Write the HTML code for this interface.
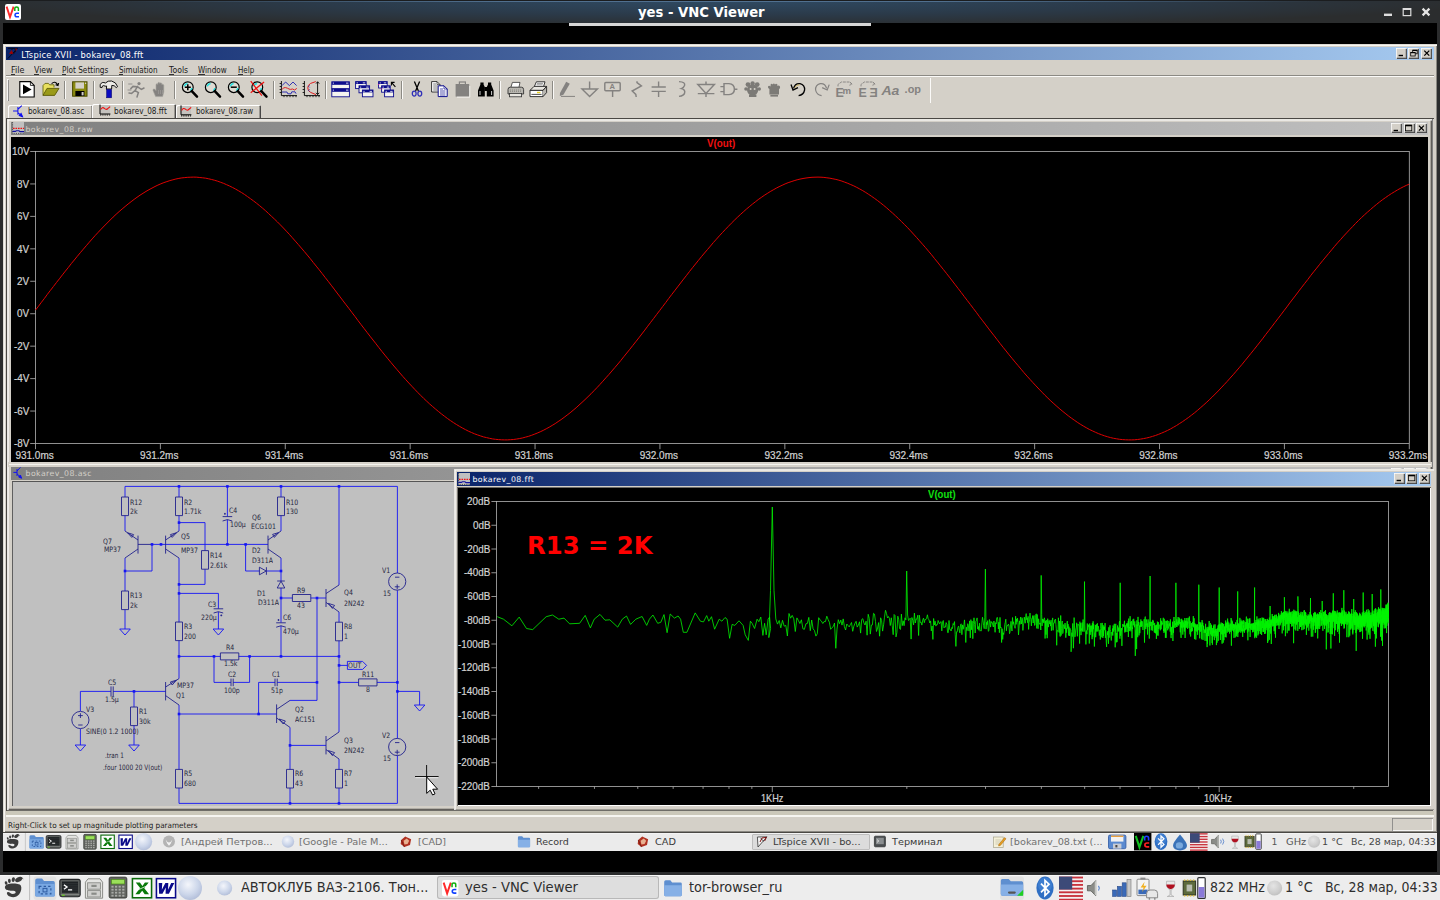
<!DOCTYPE html>
<html lang="ru"><head><meta charset="utf-8"><title>yes - VNC Viewer</title>
<style>
html,body{margin:0;padding:0;}
body{width:1440px;height:900px;overflow:hidden;background:#000;position:relative;font-family:"DejaVu Sans","Liberation Sans",sans-serif;}
.a{position:absolute;}
.t{position:absolute;white-space:nowrap;line-height:1;}
svg{position:absolute;overflow:visible;}
.ui{font-family:"DejaVu Sans","Liberation Sans",sans-serif;}
.ar{font-family:"Liberation Sans",sans-serif;}
/* classic win frame pieces */
.face{background:#d4d0c8;}
.btn{position:absolute;background:#d4d0c8;box-shadow:inset 1px 1px 0 #fff, inset -1px -1px 0 #404040, inset -2px -2px 0 #808080;}
.sep{position:absolute;width:1px;background:#808080;box-shadow:1px 0 0 #fff;}
.sunk{position:absolute;box-shadow:inset 1px 1px 0 #808080, inset -1px -1px 0 #fff;}
</style></head>
<body>
<div class="a" style="left:0;top:0;width:1440px;height:23px;background:radial-gradient(ellipse 760px 26px at 720px 0px,#2f4a63 0%,#2b3a49 55%,#2b2d2e 100%);border-top:1px solid #1b1d1f;box-sizing:border-box;"></div>
<div class="a" style="left:0;top:1px;width:1440px;height:1px;background:linear-gradient(90deg,rgba(80,110,140,0) 8%,rgba(84,116,148,0.9) 35%,rgba(84,116,148,0.9) 65%,rgba(80,110,140,0) 92%);"></div>
<div class="a" style="left:0;top:23px;width:3px;height:850px;background:#2b2c2d;"></div>
<div class="a" style="left:1437px;top:23px;width:3px;height:850px;background:#2b2c2d;"></div>
<div class="a" style="left:0;top:872.4px;width:1440px;height:3px;background:#2b2c2d;"></div>
<div class="a" style="left:5px;top:4px;width:16px;height:16px;background:#fff;border-radius:2px;"></div>
<svg style="left:5px;top:4px" width="16" height="16" viewBox="0 0 16 16"><path d="M1.6 2.6 L5 13 L8.6 2.6" fill="none" stroke="#ff2a2a" stroke-width="1.9"/><path d="M9.8 7 V4.6 Q9.8 3 11.6 3 Q13.4 3 13.4 4.6 V7" fill="none" stroke="#10b010" stroke-width="1.5"/><path d="M14 9.2 H12 Q10 9.2 10 11 Q10 12.8 12 12.8 H14" fill="none" stroke="#1040ff" stroke-width="1.5"/></svg>
<div class="t ui" style="left:638px;top:5.5px;font-size:13.2px;font-weight:bold;color:#fff;">yes - VNC Viewer</div>
<svg style="left:1380px;top:4px" width="56" height="16" viewBox="1380 4 56 16"><rect x="1384" y="13.6" width="8" height="2.4" fill="#ddd"/><rect x="1403.2" y="8.6" width="7.6" height="7" fill="none" stroke="#ddd" stroke-width="1.2"/><rect x="1403" y="8" width="8" height="2" fill="#ddd"/><path d="M1422.6 8.6 L1429.4 15.4 M1429.4 8.6 L1422.6 15.4" stroke="#e4e4e4" stroke-width="2.2"/></svg>
<div class="a" style="left:569px;top:23px;width:302px;height:3px;background:#d6d6d6;"></div>
<div class="a" style="left:3px;top:44px;width:1434px;height:788px;background:#d4d0c8;box-shadow:inset 1px 1px 0 #dedbd4, inset 2px 2px 0 #f6f5f1, inset -1px -1px 0 #8a8882;"></div>
<div class="a" style="left:6px;top:47px;width:1428px;height:13.2px;background:linear-gradient(90deg,#0a246a 0%,#a6caf0 100%);"></div>
<svg style="left:7px;top:47px" width="13" height="13" viewBox="7 47 13 13"><path d="M7.8 48.3 H17.6 L7.8 58.6" fill="none" stroke="#05081c" stroke-width="1"/><path d="M9 54 L11.6 50 L13.4 53.8 Z" fill="#a00000"/><path d="M15 48.8 H17 L15.6 52.4 Z" fill="#b00000"/><path d="M11.6 50 L12.6 48.6 M13.4 53.8 L15.4 52 L15 49" fill="none" stroke="#05081c" stroke-width="0.9"/></svg>
<span class="t" style="left:21.20px;top:51.38px;font-family:'DejaVu Sans','Liberation Sans',sans-serif;font-weight:normal;font-size:8.30px;color:#fff;letter-spacing:0.235px;">LTspice XVII - bokarev_08.fft</span>
<div class="a" style="left:1421.1px;top:48.4px;width:11.2px;height:10.5px;background:#d4d0c8;box-shadow:inset 0.7px 0.7px 0 #fff, inset -0.7px -0.7px 0 #404040, inset -1.4px -1.4px 0 #808080;"></div><div class="a" style="left:1408.1px;top:48.4px;width:11.2px;height:10.5px;background:#d4d0c8;box-shadow:inset 0.7px 0.7px 0 #fff, inset -0.7px -0.7px 0 #404040, inset -1.4px -1.4px 0 #808080;"></div><div class="a" style="left:1395.6px;top:48.4px;width:11.2px;height:10.5px;background:#d4d0c8;box-shadow:inset 0.7px 0.7px 0 #fff, inset -0.7px -0.7px 0 #404040, inset -1.4px -1.4px 0 #808080;"></div><svg style="left:1395.6px;top:48.4px" width="36.7" height="10.5" viewBox="1395.6 48.4 36.7 10.5" ><path d="M1423.9 51.0 l5 5 M1428.9 51.0 l-5 5" stroke="#000" stroke-width="1.3" fill="none"/><rect x="1412.3" y="50.6" width="4.5" height="3.6" fill="none" stroke="#000" stroke-width="0.8"/><rect x="1412.3" y="50.2" width="4.5" height="1.2" fill="#000"/><rect x="1410.3" y="52.8" width="4.5" height="3.6" fill="#d4d0c8" stroke="#000" stroke-width="0.8"/><rect x="1410.3" y="52.4" width="4.5" height="1.2" fill="#000"/><rect x="1398.2" y="55.2" width="4.4" height="1.4" fill="#000"/></svg>
<span class="t" style="left:10.50px;top:65.87px;font-family:'DejaVu Sans','Liberation Sans',sans-serif;font-weight:normal;font-size:8.90px;color:#1a1a1a;transform:scaleX(0.9065);transform-origin:0 0;">File</span>
<div class="a" style="left:10.5px;top:74px;width:4.64076px;height:0.7px;background:#333;"></div>
<span class="t" style="left:33.50px;top:65.87px;font-family:'DejaVu Sans','Liberation Sans',sans-serif;font-weight:normal;font-size:8.90px;color:#1a1a1a;transform:scaleX(0.8759);transform-origin:0 0;">View</span>
<div class="a" style="left:33.5px;top:74px;width:5.33287px;height:0.7px;background:#333;"></div>
<span class="t" style="left:61.50px;top:65.87px;font-family:'DejaVu Sans','Liberation Sans',sans-serif;font-weight:normal;font-size:8.90px;color:#1a1a1a;transform:scaleX(0.8288);transform-origin:0 0;">Plot Settings</span>
<div class="a" style="left:61.5px;top:74px;width:4.44803px;height:0.7px;background:#333;"></div>
<span class="t" style="left:118.80px;top:65.87px;font-family:'DejaVu Sans','Liberation Sans',sans-serif;font-weight:normal;font-size:8.90px;color:#1a1a1a;transform:scaleX(0.8163);transform-origin:0 0;">Simulation</span>
<div class="a" style="left:118.8px;top:74px;width:4.61174px;height:0.7px;background:#333;"></div>
<span class="t" style="left:168.80px;top:65.87px;font-family:'DejaVu Sans','Liberation Sans',sans-serif;font-weight:normal;font-size:8.90px;color:#1a1a1a;transform:scaleX(0.8758);transform-origin:0 0;">Tools</span>
<div class="a" style="left:168.8px;top:74px;width:4.76118px;height:0.7px;background:#333;"></div>
<span class="t" style="left:198.30px;top:65.87px;font-family:'DejaVu Sans','Liberation Sans',sans-serif;font-weight:normal;font-size:8.90px;color:#1a1a1a;transform:scaleX(0.8179);transform-origin:0 0;">Window</span>
<div class="a" style="left:198.3px;top:74px;width:7.19704px;height:0.7px;background:#333;"></div>
<span class="t" style="left:237.50px;top:65.87px;font-family:'DejaVu Sans','Liberation Sans',sans-serif;font-weight:normal;font-size:8.90px;color:#1a1a1a;transform:scaleX(0.8034);transform-origin:0 0;">Help</span>
<div class="a" style="left:237.5px;top:74px;width:5.37636px;height:0.7px;background:#333;"></div>
<div class="a" style="left:6px;top:75px;width:1428px;height:0.8px;background:#8c8a84;"></div>
<div class="a" style="left:6px;top:75.8px;width:1428px;height:0.8px;background:#fbfaf8;"></div>
<span class="t" style="left:8.40px;top:821.70px;font-family:'DejaVu Sans','Liberation Sans',sans-serif;font-weight:normal;font-size:7.80px;color:#1a1a1a;transform:scaleX(0.9300);transform-origin:0 0;">Right-Click to set up magnitude plotting parameters</span>
<div class="a" style="left:1392px;top:818px;width:41px;height:12.5px;box-shadow:inset 0.8px 0.8px 0 #808080, inset -0.8px -0.8px 0 #fff;"></div>
<div class="a" style="left:6px;top:811.4px;width:1428px;height:4px;background:#cbc8ba;"></div>
<div class="a" style="left:6px;top:815.4px;width:1428px;height:1.3px;background:#f6f5f1;"></div>
<div class="a" style="left:3px;top:831.7px;width:1434px;height:1.1px;background:#4a4844;"></div>
<div class="a" style="left:6px;top:118px;width:1428px;height:693.4px;background:#808080;box-shadow:inset 1.2px 1px 0 #4a4844, inset -1px 0 0 #d4d0c8, inset 0 -1.5px 0 #6e6c67;"></div>
<div class="a" style="left:7.2px;top:79px;width:2.2px;height:21.5px;background:#d4d0c8;box-shadow:inset 0.8px 0.8px 0 #fff, inset -0.8px -0.8px 0 #808080;"></div>
<div class="a" style="left:63.9px;top:80.5px;width:0.8px;height:18.5px;background:#8c8a84;"></div>
<div class="a" style="left:64.7px;top:80.5px;width:0.8px;height:18.5px;background:#fbfaf8;"></div>
<div class="a" style="left:92.9px;top:80.5px;width:0.8px;height:18.5px;background:#8c8a84;"></div>
<div class="a" style="left:93.7px;top:80.5px;width:0.8px;height:18.5px;background:#fbfaf8;"></div>
<div class="a" style="left:121.9px;top:80.5px;width:0.8px;height:18.5px;background:#8c8a84;"></div>
<div class="a" style="left:122.7px;top:80.5px;width:0.8px;height:18.5px;background:#fbfaf8;"></div>
<div class="a" style="left:173.9px;top:80.5px;width:0.8px;height:18.5px;background:#8c8a84;"></div>
<div class="a" style="left:174.7px;top:80.5px;width:0.8px;height:18.5px;background:#fbfaf8;"></div>
<div class="a" style="left:272.9px;top:80.5px;width:0.8px;height:18.5px;background:#8c8a84;"></div>
<div class="a" style="left:273.7px;top:80.5px;width:0.8px;height:18.5px;background:#fbfaf8;"></div>
<div class="a" style="left:324.9px;top:80.5px;width:0.8px;height:18.5px;background:#8c8a84;"></div>
<div class="a" style="left:325.7px;top:80.5px;width:0.8px;height:18.5px;background:#fbfaf8;"></div>
<div class="a" style="left:401.1px;top:80.5px;width:0.8px;height:18.5px;background:#8c8a84;"></div>
<div class="a" style="left:401.9px;top:80.5px;width:0.8px;height:18.5px;background:#fbfaf8;"></div>
<div class="a" style="left:498.9px;top:80.5px;width:0.8px;height:18.5px;background:#8c8a84;"></div>
<div class="a" style="left:499.7px;top:80.5px;width:0.8px;height:18.5px;background:#fbfaf8;"></div>
<div class="a" style="left:551.9px;top:80.5px;width:0.8px;height:18.5px;background:#8c8a84;"></div>
<div class="a" style="left:552.7px;top:80.5px;width:0.8px;height:18.5px;background:#fbfaf8;"></div>
<div class="a" style="left:929.6px;top:77.6px;width:0.8px;height:25px;background:#8c8a84;"></div>
<div class="a" style="left:930.4px;top:77.6px;width:0.8px;height:25px;background:#fbfaf8;"></div>
<svg style="left:0px;top:78px" width="940" height="25" viewBox="0 78 940 25" ><g transform="translate(19,81)"><path d="M0.8 0.6 H11.4 L15.2 4.4 V16 H0.8 Z" fill="#fff" stroke="#000" stroke-width="1.1"/><path d="M11.4 0.6 V4.4 H15.2" fill="none" stroke="#000" stroke-width="0.8"/><path d="M4 3.6 L12.6 8.4 L4 13.2 Z" fill="#000"/></g><g transform="translate(42,81)"><path d="M1 14.4 V4.6 L3 2.4 H6.4 L7.6 3.8 H12 V6.4" fill="#e8e060" stroke="#6a6a10" stroke-width="0.9"/><path d="M1 14.4 L5 7.4 H17 L12.6 14.4 Z" fill="#9a9a18" stroke="#5a5a08" stroke-width="0.9"/><path d="M9.6 2.6 Q13 -0.6 15.6 3.6 M13.6 3.8 L16 4.6 L16.6 2" fill="none" stroke="#000" stroke-width="1.1"/></g><g transform="translate(72,81)"><rect x="0.6" y="0.8" width="14.4" height="14.4" fill="#8a8a10" stroke="#4a4a00" stroke-width="1"/><rect x="3.4" y="1.4" width="8.6" height="6.2" fill="#d4d0c8"/><rect x="3.4" y="10" width="9" height="5" fill="#000"/><rect x="9.6" y="11" width="2" height="3.4" fill="#d4d0c8"/><rect x="13" y="1.6" width="1.2" height="1.4" fill="#d4d0c8"/></g><g transform="translate(99,80)"><path d="M1.2 7.4 Q0.2 3.6 3.2 2.6 Q5 2.2 6.4 3 Q9 0.4 12.6 1 Q17 2 18.6 6.6 L17.2 7.6 Q15.4 5 12.8 5.4 L12.6 9 H7.4 L7.6 6 Q6 6.6 4.8 5.6 Q3 5.4 3 7.6 Z" fill="#ecebe6" stroke="#111" stroke-width="1"/><rect x="7.6" y="9.4" width="5" height="8.4" fill="#0a0ac0" stroke="#000060" stroke-width="0.5"/></g><g transform="translate(128,81)" stroke="#848280" fill="none" stroke-width="1.5" stroke-linecap="round"><circle cx="11" cy="2.6" r="1.6" fill="#848280" stroke="none"/><path d="M9.6 5.4 L7 9.6 L10.4 11.6 L9 16 M7.6 9 L3.6 12.4 L1 12 M9.2 5.8 L5 5.4 L2.8 7.6 M10 6.2 L13.4 8.4 L16 7"/><path d="M0.6 3 H4 M0 9 H3" stroke-width="0.8"/></g><g transform="translate(152,81)"><path d="M3.6 15.6 L1 9.4 Q0.6 7.6 2.6 8 L4 9.6 V3.4 Q4.8 2 5.8 3.4 V2 Q6.8 0.6 7.8 2 V2.4 Q8.8 1 9.8 2.4 V3.6 Q10.8 2.6 11.8 4 V11 L10.6 15.6 Z" fill="#848280" stroke="#a4a29c" stroke-width="0.6"/><path d="M6 10 h0.8 m1.2 0 h0.8 m1.2 0 h0.8 M6 12 h0.8 m1.2 0 h0.8 m1.2 0 h0.8" stroke="#c8c6c0" stroke-width="0.7"/></g><g transform="translate(181,81)"><circle cx="6.8" cy="6.2" r="5.4" fill="#dedbd3" stroke="#000" stroke-width="1.2"/><path d="M3.2 5.4 Q4 2.8 6.6 2.4 M9.4 9.6 Q10.6 8.6 10.8 7" stroke="#20e0e0" stroke-width="1.5" fill="none"/><path d="M10.8 10.2 L16 15.6" stroke="#000" stroke-width="2.5" stroke-linecap="round"/><path d="M3.8 6.2 H9.8 M6.8 3.2 V9.2" stroke="#000" stroke-width="1.5"/></g><g transform="translate(204,81)"><circle cx="6.8" cy="6.2" r="5.4" fill="#dedbd3" stroke="#000" stroke-width="1.2"/><path d="M3.2 5.4 Q4 2.8 6.6 2.4 M9.4 9.6 Q10.6 8.6 10.8 7" stroke="#20e0e0" stroke-width="1.5" fill="none"/><path d="M10.8 10.2 L16 15.6" stroke="#000" stroke-width="2.5" stroke-linecap="round"/></g><g transform="translate(227,81)"><circle cx="6.8" cy="6.2" r="5.4" fill="#dedbd3" stroke="#000" stroke-width="1.2"/><path d="M3.2 5.4 Q4 2.8 6.6 2.4 M9.4 9.6 Q10.6 8.6 10.8 7" stroke="#20e0e0" stroke-width="1.5" fill="none"/><path d="M10.8 10.2 L16 15.6" stroke="#000" stroke-width="2.5" stroke-linecap="round"/><path d="M3.8 6.2 H9.8" stroke="#000" stroke-width="1.5"/></g><g transform="translate(250.5,81)"><circle cx="6.8" cy="6.2" r="5.4" fill="#dedbd3" stroke="#000" stroke-width="1.2"/><path d="M3.2 5.4 Q4 2.8 6.6 2.4 M9.4 9.6 Q10.6 8.6 10.8 7" stroke="#20e0e0" stroke-width="1.5" fill="none"/><path d="M10.8 10.2 L16 15.6" stroke="#000" stroke-width="2.5" stroke-linecap="round"/><path d="M0.2 0.2 L11.4 14.6 M13.6 1 L0.2 11.8" stroke="#f01010" stroke-width="1.2"/></g><g transform="translate(279,81)"><path d="M2.4 0 V14.6 H18" fill="none" stroke="#000" stroke-width="0.9"/><path d="M0.6 2.5 h1.8 M0.6 5.5 h1.8 M0.6 8.5 h1.8 M0.6 11.5 h1.8 M5 14.6 v1.6 M8 14.6 v1.6 M11 14.6 v1.6 M14 14.6 v1.6 M17 14.6 v1.6" stroke="#000" stroke-width="0.8"/><path d="M3 4.6 L6.6 1 L10.4 4.6 L14 1 L17.6 4.6" fill="none" stroke="#2020b0" stroke-width="0.9"/><path d="M3 8.6 Q4.4 6 6.6 6.6 T10 8 T13.6 8 L15.6 9 L17.8 7.4" fill="none" stroke="#e02020" stroke-width="1"/><path d="M3 11 H8 L8.8 12.8 H12 L12.8 10.8 H16 L17 12.6" fill="none" stroke="#2020b0" stroke-width="0.9"/></g><g transform="translate(302,81)"><path d="M2.4 0 V14.6 H18" fill="none" stroke="#000" stroke-width="0.9"/><path d="M0.6 2.5 h1.8 M0.6 5.5 h1.8 M0.6 8.5 h1.8 M0.6 11.5 h1.8 M5 14.6 v1.6 M8 14.6 v1.6 M11 14.6 v1.6 M14 14.6 v1.6 M17 14.6 v1.6" stroke="#000" stroke-width="0.8"/><path d="M13.8 0.6 L8.6 2.4 Q5.6 4 5.8 7 Q5.8 10 8.6 11.4 L14 13.6" fill="none" stroke="#e02020" stroke-width="1"/><path d="M7.6 4.4 l-1 1 l1 1 M7.6 8.4 l-1 1 l1 1" fill="none" stroke="#2020b0" stroke-width="0.8"/><path d="M15.6 0.8 V13.6 M14 2.6 L15.6 0.8 L17.2 2.6 M14 11.8 L15.6 13.6 L17.2 11.8" fill="none" stroke="#000" stroke-width="0.9"/></g><g transform="translate(331,81)"><rect x="0.8" y="0.8" width="17.6" height="7" fill="#f4f3ef" stroke="#0c0c8c" stroke-width="0.9"/><rect x="0.8" y="0.8" width="17.6" height="3" fill="#0c0c8c"/><rect x="1.8" y="1.7" width="1.2" height="0.8" fill="#fff"/><rect x="15" y="1.7" width="2.4" height="0.8" fill="#fff"/><rect x="0.8" y="7.8" width="17.6" height="8" fill="#f4f3ef" stroke="#0c0c8c" stroke-width="0.9"/><rect x="0.8" y="7.8" width="17.6" height="3" fill="#0c0c8c"/><rect x="1.8" y="8.7" width="1.2" height="0.8" fill="#fff"/><rect x="15" y="8.7" width="2.4" height="0.8" fill="#fff"/></g><g transform="translate(355,81)"><rect x="0.6" y="0.6" width="10.6" height="7" fill="#f4f3ef" stroke="#0c0c8c" stroke-width="0.9"/><rect x="0.6" y="0.6" width="10.6" height="2.4" fill="#0c0c8c"/><rect x="1.6" y="1.5" width="1.2" height="0.8" fill="#fff"/><rect x="7.8" y="1.5" width="2.4" height="0.8" fill="#fff"/><rect x="4" y="4.8" width="10.6" height="7" fill="#f4f3ef" stroke="#0c0c8c" stroke-width="0.9"/><rect x="4" y="4.8" width="10.6" height="2.4" fill="#0c0c8c"/><rect x="5" y="5.7" width="1.2" height="0.8" fill="#fff"/><rect x="11.2" y="5.7" width="2.4" height="0.8" fill="#fff"/><rect x="7.4" y="9" width="10.6" height="6.8" fill="#f4f3ef" stroke="#0c0c8c" stroke-width="0.9"/><rect x="7.4" y="9" width="10.6" height="2.4" fill="#0c0c8c"/><rect x="8.4" y="9.9" width="1.2" height="0.8" fill="#fff"/><rect x="14.6" y="9.9" width="2.4" height="0.8" fill="#fff"/></g><g transform="translate(378,81)"><rect x="0.6" y="0.6" width="8.6" height="6.4" fill="#f4f3ef" stroke="#0c0c8c" stroke-width="0.9"/><rect x="0.6" y="0.6" width="8.6" height="2.4" fill="#0c0c8c"/><rect x="1.6" y="1.5" width="1.2" height="0.8" fill="#fff"/><rect x="5.8" y="1.5" width="2.4" height="0.8" fill="#fff"/><rect x="3.6" y="4.8" width="8.6" height="6.4" fill="#f4f3ef" stroke="#0c0c8c" stroke-width="0.9"/><rect x="3.6" y="4.8" width="8.6" height="2.4" fill="#0c0c8c"/><rect x="4.6" y="5.7" width="1.2" height="0.8" fill="#fff"/><rect x="8.8" y="5.7" width="2.4" height="0.8" fill="#fff"/><rect x="6.6" y="9" width="9" height="6.8" fill="#f4f3ef" stroke="#0c0c8c" stroke-width="0.9"/><rect x="6.6" y="9" width="9" height="2.4" fill="#0c0c8c"/><rect x="7.6" y="9.9" width="1.2" height="0.8" fill="#fff"/><rect x="12.2" y="9.9" width="2.4" height="0.8" fill="#fff"/><path d="M17.4 5.8 L13.6 1.6 M13.4 4.6 V1.4 H16.6" fill="none" stroke="#000" stroke-width="1.1"/><rect x="0.2" y="3" width="1" height="1" fill="#d02090"/><rect x="3.2" y="7.4" width="1" height="1" fill="#d02090"/></g><g transform="translate(411,81)"><path d="M3.4 0.6 L7.4 10 M8.6 0.6 L4.6 10" stroke="#000" stroke-width="1.3" fill="none"/><ellipse cx="3.2" cy="12.6" rx="1.9" ry="2.5" fill="none" stroke="#3030b8" stroke-width="1.3"/><ellipse cx="8.8" cy="12.6" rx="1.9" ry="2.5" fill="none" stroke="#3030b8" stroke-width="1.3"/></g><g transform="translate(431,81)"><path d="M0.6 0.6 H6 L9 3.6 V11 H0.6 Z" fill="#fff" stroke="#222" stroke-width="0.9"/><path d="M6 0.6 V3.6 H9" fill="none" stroke="#222" stroke-width="0.7"/><path d="M2.2 3 H5 M2.2 5 H7 M2.2 7 H7 M2.2 9 H7" stroke="#444" stroke-width="0.7"/><path d="M7.2 4.8 H13 L16.2 8 V15.6 H7.2 Z" fill="#fff" stroke="#0c0c8c" stroke-width="1"/><path d="M13 4.8 V8 H16.2" fill="none" stroke="#0c0c8c" stroke-width="0.7"/><path d="M9 8 H12 M9 10 H14.4 M9 12 H14.4 M9 14 H14.4" stroke="#0c0c8c" stroke-width="0.7"/></g><g transform="translate(455,81)"><rect x="0.6" y="3" width="13.6" height="12.6" fill="#848280"/><rect x="4.4" y="1" width="6" height="3.4" fill="none" stroke="#848280" stroke-width="1.2"/><path d="M14.8 5 V16.2 H2" stroke="#f4f3ef" stroke-width="0.9" fill="none"/></g><g transform="translate(477,81)"><path d="M1 15.4 V9.6 L3.4 3.6 V1.6 H6.6 V3.6 L7.8 6 V15.4 Z" fill="#000"/><path d="M16.6 15.4 V9.6 L14.2 3.6 V1.6 H11 V3.6 L9.8 6 V15.4 Z" fill="#000"/><rect x="7.4" y="6" width="2.8" height="4" fill="#000"/><path d="M3 10 V14 M14.6 10 V14" stroke="#fff" stroke-width="0.8"/></g><g transform="translate(507,81)"><path d="M4 6 L5.4 1.4 H13 L12 6" fill="#fff" stroke="#333" stroke-width="0.8"/><path d="M1 8.6 Q1 6.2 3.2 6.2 H14.4 Q16.6 6.2 16.6 8.6 V13 H1 Z" fill="#b8b6b0" stroke="#333" stroke-width="0.9"/><rect x="2.6" y="12.4" width="12" height="3.4" fill="#e8e6e0" stroke="#333" stroke-width="0.8"/><path d="M3 9 h11 M3 10.4 h11" stroke="#7a7872" stroke-width="0.7" stroke-dasharray="1 1"/></g><g transform="translate(529,81)"><path d="M5.4 5.4 L7.4 0.8 H16 L14.6 5.4" fill="#fff" stroke="#222" stroke-width="0.9"/><path d="M8 2.4 h6 M7.6 3.8 h6" stroke="#555" stroke-width="0.6"/><path d="M1 9.4 L5 5.4 H17.6 L14 9.4 Z" fill="#e8e6e0" stroke="#222" stroke-width="0.9"/><path d="M1 9.4 H14 V15.6 H1 Z" fill="#fff" stroke="#222" stroke-width="0.9"/><path d="M14 9.4 L17.6 5.4 V11.6 L14 15.6" fill="#b8b6b0" stroke="#222" stroke-width="0.9"/><rect x="8" y="10.8" width="3.4" height="1.4" fill="#e8d020"/><path d="M2.4 13.4 H12.6" stroke="#222" stroke-width="0.8"/></g><g transform="translate(559,81)"><path d="M1 12 L7.2 0.8 L10.8 2.8 L4.4 13.8 L0.8 15 Z" fill="#848280"/><path d="M2 15.4 H16" stroke="#848280" stroke-width="1"/></g><g transform="translate(581,81)" stroke="#848280" fill="none" stroke-width="1.45"><path d="M8.6 0.6 V8 M1 8 H16.4 L8.6 15.6 Z"/></g><g transform="translate(604,81)" stroke="#848280" fill="none" stroke-width="1.45"><rect x="0.8" y="1.4" width="15.4" height="8.4" rx="1"/><path d="M8.6 9.8 V16"/></g><text x="609.4" y="89.4" font-family="Liberation Sans,sans-serif" font-weight="bold" font-size="7.6" fill="#848280">A</text><g transform="translate(630,81)" stroke="#848280" fill="none" stroke-width="1.45"><path d="M7 0.2 V1.6 L11.4 5 L2.2 10 L5.8 13.4 L6.2 16"/></g><g transform="translate(651,81)" stroke="#848280" fill="none" stroke-width="1.45"><path d="M7.6 0.4 V6 M7.6 10.4 V16 M0.6 6 H14.8 M0.6 10.4 H14.8" stroke-width="1.4"/></g><g transform="translate(677,81)" stroke="#848280" fill="none" stroke-width="1.45"><path d="M2 0.6 Q8.6 1 7.6 4.4 Q7 6.6 4.4 7.6 Q8.6 8.6 7.6 12 Q7 14.6 2 15.4"/></g><g transform="translate(697,81)" stroke="#848280" fill="none" stroke-width="1.45"><path d="M0.8 3.4 H17.4 L9 12.4 Z M0.8 12.6 H17.4 M9 0.6 V3.4 M9 12.6 V16"/></g><g transform="translate(720,81)" stroke="#848280" fill="none" stroke-width="1.45"><path d="M0.4 5.6 H4 M0.4 10.6 H4 M4 2.6 H9 Q14.4 3 14.4 8.2 Q14.4 13 9 13.6 H4 Z M14.4 8.2 H17.4"/></g><g transform="translate(744,81)" fill="#7c7a76"><circle cx="8.6" cy="9" r="5.6"/><circle cx="4" cy="3.6" r="2.4"/><circle cx="8.6" cy="2.4" r="2.2"/><circle cx="13.2" cy="3.6" r="2.4"/><circle cx="2" cy="8" r="1.8"/><circle cx="15.2" cy="8" r="1.8"/><rect x="5" y="13.6" width="7.4" height="2.4"/><circle cx="6.6" cy="8" r="1" fill="#d4d0c8"/><circle cx="10.6" cy="8" r="1" fill="#d4d0c8"/></g><g transform="translate(767,82)" fill="#7c7a76"><path d="M2.4 12.4 V7 Q0.6 6 1 4.4 Q2 3 3.6 4.4 V2.6 Q4.6 1 5.8 2.4 Q6.8 0.4 8 2.4 Q9.2 1 10.4 2.6 V4 Q12 3 13 4.6 Q13.6 6.4 12 7.2 V12.4 Z"/><rect x="3.4" y="12.8" width="7.6" height="1.8"/></g><g transform="translate(790,81)" fill="none"><path d="M3.6 7.4 Q5 2 10 2.6 Q15 4 14.6 9 Q13.6 14 8.6 14.6" stroke="#000" stroke-width="1.3"/><path d="M1 3.6 L3 9 L8 6.6" stroke="#000" stroke-width="1.3"/><path d="M4.6 7 Q6 3.4 9.6 3.8" stroke="#c8a020" stroke-width="0.6"/></g><g transform="translate(814,81)" fill="none" stroke="#848280" stroke-width="1.2"><path d="M12.6 7.4 Q11.2 2 6.2 2.6 Q1.2 4 1.6 9 Q2.6 14 7.6 14.6"/><path d="M15.2 3.6 L13.2 9 L8.2 6.6"/></g><g transform="translate(835,81)" fill="none" stroke="#848280" stroke-width="0.9"><path d="M3 5.4 V3.4 L6.4 1 H14.4 L17 3 M15 1.2 L17.2 3.2 L14.4 4.2" stroke-dasharray="3 0.8"/></g><g transform="translate(858,81)" fill="none" stroke="#848280" stroke-width="0.9"><path d="M3 5.4 V3.4 L6.4 1 H14.4 L17 3 M15 1.2 L17.2 3.2 L14.4 4.2" stroke-dasharray="3 0.8"/></g><text x="835.4" y="97.4" font-size="12.4" font-family="Liberation Sans,sans-serif" font-weight="bold" fill="#848280">E</text><text x="842.4" y="93.6" font-size="9.6" font-family="Liberation Sans,sans-serif" font-weight="bold" fill="#848280">m</text><text x="858.4" y="97.4" font-size="12.4" font-family="Liberation Sans,sans-serif" font-weight="bold" fill="#848280">E</text><text x="869.4" y="97.4" font-size="12.4" font-family="Liberation Sans,sans-serif" font-weight="bold" fill="#848280">Ǝ</text><text x="881.4" y="95.2" font-size="13" font-style="italic" font-family="Liberation Sans,sans-serif" font-weight="bold" fill="#848280" textLength="18" lengthAdjust="spacingAndGlyphs">Aa</text><text x="904.6" y="93.4" font-size="10.4" font-family="Liberation Sans,sans-serif" font-weight="bold" fill="#848280" textLength="16.4" lengthAdjust="spacingAndGlyphs">.op</text></svg>
<div class="a" style="left:7.6px;top:105.4px;width:85px;height:12.2px;background:#d4d0c8;border-radius:2px 2px 0 0;box-shadow:inset 0.9px 0.9px 0 #fff, inset -0.9px 0 0 #404040, inset -1.8px 0 0 #8a8882;"></div>
<div class="a" style="left:176px;top:105.4px;width:84.6px;height:12.2px;background:#d4d0c8;border-radius:2px 2px 0 0;box-shadow:inset 0.9px 0.9px 0 #fff, inset -0.9px 0 0 #404040, inset -1.8px 0 0 #8a8882;"></div>
<div class="a" style="left:92.4px;top:103.6px;width:83.6px;height:14.8px;background:#d4d0c8;border-radius:2px 2px 0 0;box-shadow:inset 0.9px 0.9px 0 #fff, inset -0.9px 0 0 #404040, inset -1.8px 0 0 #8a8882;"></div>
<span class="t" style="left:28.40px;top:107.46px;font-family:'DejaVu Sans','Liberation Sans',sans-serif;font-weight:normal;font-size:8.80px;color:#1a1a1a;transform:scaleX(0.8197);transform-origin:0 0;">bokarev_08.asc</span>
<span class="t" style="left:114.20px;top:106.96px;font-family:'DejaVu Sans','Liberation Sans',sans-serif;font-weight:normal;font-size:8.80px;color:#1a1a1a;transform:scaleX(0.8346);transform-origin:0 0;">bokarev_08.fft</span>
<span class="t" style="left:195.80px;top:107.46px;font-family:'DejaVu Sans','Liberation Sans',sans-serif;font-weight:normal;font-size:8.80px;color:#1a1a1a;transform:scaleX(0.8177);transform-origin:0 0;">bokarev_08.raw</span>
<svg style="left:0px;top:103px" width="270" height="16" viewBox="0 103 270 16" ><g transform="translate(12.6,105.2) scale(1.15)" stroke="#1010f0" fill="none" stroke-width="0.9"><path d="M0.4 5 H4.6 M4.6 1.6 V8.4 M4.6 3.6 L8 0.4 M4.6 6.4 L8.6 10"/><path d="M8.6 10 L5.8 9 L7.4 7.2 Z" fill="#1010f0"/></g><g transform="translate(98.4,104.6)"><rect x="1.6" y="0.4" width="10" height="8.6" fill="#c4c2be"/><path d="M1.6 0 V9.4 H12" stroke="#000" stroke-width="1" fill="none"/><path d="M1.6 10.4 H12" stroke="#000" stroke-width="1.2" stroke-dasharray="0.8 1"/><path d="M2.2 5 Q4 1.8 6 3.8 T9.6 3.8 L11.8 2" fill="none" stroke="#f01010" stroke-width="1.1"/></g><g transform="translate(179.4,105.4)"><rect x="1.6" y="0.4" width="10" height="8.6" fill="#c4c2be"/><path d="M1.6 0 V9.4 H12" stroke="#000" stroke-width="1" fill="none"/><path d="M1.6 10.4 H12" stroke="#000" stroke-width="1.2" stroke-dasharray="0.8 1"/><path d="M2.2 5 Q4 1.8 6 3.8 T9.6 3.8 L11.8 2" fill="none" stroke="#f01010" stroke-width="1.1"/></g></svg>
<div class="a" style="left:7px;top:119px;width:1425px;height:345.4px;background:#d4d0c8;box-shadow:inset 0.8px 0.8px 0 #e4e2dc, inset 1.6px 1.6px 0 #fff, inset -0.8px -0.8px 0 #55534f, inset -1.6px -1.6px 0 #8c8a84;"></div>
<div class="a" style="left:11px;top:122px;width:1417.4px;height:13.2px;background:linear-gradient(90deg,#808080 0%,#c0c0c0 100%);"></div>
<svg style="left:11.6px;top:122.4px" width="12" height="12" viewBox="0 0 12 12"><rect x="0.4" y="0" width="11.6" height="12" fill="#c0c0c0"/><path d="M0.6 0 V11" stroke="#222" stroke-width="0.8" stroke-dasharray="0.8 1"/><path d="M1 6.4 H12" stroke="#f01010" stroke-width="1.1" stroke-dasharray="1.6 0.9"/><path d="M0.6 9.4 H3.4 L4.4 8.8 H7 L8 9.6 H12" stroke="#1010a0" stroke-width="1.1" fill="none"/><path d="M0.6 11.4 H12" stroke="#222" stroke-width="0.9" stroke-dasharray="0.8 1"/></svg>
<span class="t" style="left:25.40px;top:125.50px;font-family:'DejaVu Sans','Liberation Sans',sans-serif;font-weight:normal;font-size:7.80px;color:#d4d0c8;letter-spacing:0.414px;">bokarev_08.raw</span>
<div class="a" style="left:1416.4px;top:123.2px;width:11.0px;height:10.3px;background:#d4d0c8;box-shadow:inset 0.7px 0.7px 0 #fff, inset -0.7px -0.7px 0 #404040, inset -1.4px -1.4px 0 #808080;"></div><div class="a" style="left:1403.6px;top:123.2px;width:11.0px;height:10.3px;background:#d4d0c8;box-shadow:inset 0.7px 0.7px 0 #fff, inset -0.7px -0.7px 0 #404040, inset -1.4px -1.4px 0 #808080;"></div><div class="a" style="left:1391.3px;top:123.2px;width:11.0px;height:10.3px;background:#d4d0c8;box-shadow:inset 0.7px 0.7px 0 #fff, inset -0.7px -0.7px 0 #404040, inset -1.4px -1.4px 0 #808080;"></div><svg style="left:1391.3px;top:123.2px" width="36.1" height="10.3" viewBox="1391.3 123.2 36.1 10.3" ><path d="M1419.2 125.8 l5 5 M1424.2 125.8 l-5 5" stroke="#000" stroke-width="1.3" fill="none"/><rect x="1405.9" y="125.4" width="6.2" height="5.6" fill="none" stroke="#000" stroke-width="0.8"/><rect x="1405.9" y="125.0" width="6.2" height="1.5" fill="#000"/><rect x="1393.9" y="130.0" width="4.4" height="1.4" fill="#000"/></svg>
<div class="a" style="left:11.4px;top:137px;width:1416.8px;height:325px;background:#000;"></div>
<svg style="left:11px;top:137px" width="1418" height="325" viewBox="11 137 1418 325" ><rect x="35.5" y="151.5" width="1373.8" height="292" fill="none" stroke="#b4b4b4" stroke-width="0.8"/><path d="M30.2 151.50 H35.5 M30.2 183.94 H35.5 M30.2 216.39 H35.5 M30.2 248.83 H35.5 M30.2 281.28 H35.5 M30.2 313.72 H35.5 M30.2 346.17 H35.5 M30.2 378.61 H35.5 M30.2 411.06 H35.5 M30.2 443.50 H35.5 M35.50 443.5 V449.2 M160.39 443.5 V449.2 M285.28 443.5 V449.2 M410.17 443.5 V449.2 M535.06 443.5 V449.2 M659.95 443.5 V449.2 M784.85 443.5 V449.2 M909.74 443.5 V449.2 M1034.63 443.5 V449.2 M1159.52 443.5 V449.2 M1284.41 443.5 V449.2 M1409.30 443.5 V449.2 " stroke="#b4b4b4" stroke-width="0.8" fill="none"/><polyline points="35.5,310.1 38.5,306.2 41.5,302.2 44.5,298.3 47.4,294.3 50.4,290.4 53.4,286.5 56.4,282.6 59.4,278.8 62.4,274.9 65.4,271.1 68.4,267.4 71.3,263.6 74.3,260.0 77.3,256.3 80.3,252.7 83.3,249.2 86.3,245.7 89.3,242.2 92.2,238.9 95.2,235.5 98.2,232.3 101.2,229.1 104.2,226.0 107.2,223.0 110.2,220.0 113.1,217.1 116.1,214.3 119.1,211.6 122.1,209.0 125.1,206.5 128.1,204.0 131.1,201.7 134.1,199.4 137.0,197.3 140.0,195.2 143.0,193.3 146.0,191.4 149.0,189.7 152.0,188.1 155.0,186.5 157.9,185.1 160.9,183.8 163.9,182.6 166.9,181.6 169.9,180.6 172.9,179.8 175.9,179.0 178.9,178.4 181.8,177.9 184.8,177.6 187.8,177.3 190.8,177.2 193.8,177.1 196.8,177.2 199.8,177.5 202.7,177.8 205.7,178.2 208.7,178.8 211.7,179.5 214.7,180.3 217.7,181.2 220.7,182.3 223.7,183.4 226.6,184.7 229.6,186.0 232.6,187.5 235.6,189.1 238.6,190.8 241.6,192.6 244.6,194.5 247.5,196.6 250.5,198.7 253.5,200.9 256.5,203.2 259.5,205.6 262.5,208.1 265.5,210.7 268.4,213.4 271.4,216.2 274.4,219.0 277.4,221.9 280.4,224.9 283.4,228.0 286.4,231.2 289.4,234.4 292.3,237.7 295.3,241.1 298.3,244.5 301.3,248.0 304.3,251.5 307.3,255.1 310.3,258.7 313.2,262.4 316.2,266.1 319.2,269.8 322.2,273.6 325.2,277.5 328.2,281.3 331.2,285.2 334.2,289.1 337.1,293.0 340.1,296.9 343.1,300.9 346.1,304.8 349.1,308.7 352.1,312.7 355.1,316.6 358.0,320.6 361.0,324.5 364.0,328.4 367.0,332.3 370.0,336.2 373.0,340.0 376.0,343.8 378.9,347.6 381.9,351.4 384.9,355.1 387.9,358.8 390.9,362.4 393.9,366.0 396.9,369.5 399.9,373.0 402.8,376.4 405.8,379.7 408.8,383.0 411.8,386.2 414.8,389.4 417.8,392.5 420.8,395.5 423.7,398.4 426.7,401.2 429.7,404.0 432.7,406.6 435.7,409.2 438.7,411.7 441.7,414.1 444.7,416.4 447.6,418.6 450.6,420.7 453.6,422.7 456.6,424.6 459.6,426.4 462.6,428.1 465.6,429.7 468.5,431.2 471.5,432.5 474.5,433.8 477.5,434.9 480.5,435.9 483.5,436.9 486.5,437.6 489.5,438.3 492.4,438.9 495.4,439.3 498.4,439.6 501.4,439.8 504.4,439.9 507.4,439.9 510.4,439.7 513.3,439.5 516.3,439.1 519.3,438.6 522.3,438.0 525.3,437.2 528.3,436.4 531.3,435.4 534.2,434.3 537.2,433.1 540.2,431.8 543.2,430.4 546.2,428.8 549.2,427.2 552.2,425.4 555.2,423.6 558.1,421.6 561.1,419.6 564.1,417.4 567.1,415.1 570.1,412.8 573.1,410.3 576.1,407.8 579.0,405.1 582.0,402.4 585.0,399.6 588.0,396.7 591.0,393.8 594.0,390.7 597.0,387.6 600.0,384.4 602.9,381.2 605.9,377.8 608.9,374.5 611.9,371.0 614.9,367.5 617.9,364.0 620.9,360.4 623.8,356.7 626.8,353.0 629.8,349.3 632.8,345.5 635.8,341.7 638.8,337.9 641.8,334.0 644.8,330.1 647.7,326.2 650.7,322.3 653.7,318.4 656.7,314.4 659.7,310.5 662.7,306.5 665.7,302.6 668.6,298.6 671.6,294.7 674.6,290.8 677.6,286.9 680.6,283.0 683.6,279.1 686.6,275.3 689.5,271.5 692.5,267.7 695.5,264.0 698.5,260.3 701.5,256.6 704.5,253.0 707.5,249.5 710.5,246.0 713.4,242.5 716.4,239.2 719.4,235.8 722.4,232.6 725.4,229.4 728.4,226.3 731.4,223.2 734.3,220.3 737.3,217.4 740.3,214.6 743.3,211.9 746.3,209.2 749.3,206.7 752.3,204.2 755.3,201.9 758.2,199.6 761.2,197.5 764.2,195.4 767.2,193.5 770.2,191.6 773.2,189.9 776.2,188.2 779.1,186.7 782.1,185.3 785.1,183.9 788.1,182.7 791.1,181.7 794.1,180.7 797.1,179.8 800.0,179.1 803.0,178.5 806.0,178.0 809.0,177.6 812.0,177.3 815.0,177.2 818.0,177.1 821.0,177.2 823.9,177.4 826.9,177.8 829.9,178.2 832.9,178.8 835.9,179.4 838.9,180.2 841.9,181.1 844.8,182.2 847.8,183.3 850.8,184.6 853.8,185.9 856.8,187.4 859.8,189.0 862.8,190.7 865.8,192.5 868.7,194.4 871.7,196.4 874.7,198.5 877.7,200.7 880.7,203.0 883.7,205.4 886.7,207.9 889.6,210.5 892.6,213.1 895.6,215.9 898.6,218.7 901.6,221.7 904.6,224.7 907.6,227.7 910.6,230.9 913.5,234.1 916.5,237.4 919.5,240.8 922.5,244.2 925.5,247.6 928.5,251.2 931.5,254.7 934.4,258.4 937.4,262.0 940.4,265.8 943.4,269.5 946.4,273.3 949.4,277.1 952.4,281.0 955.3,284.8 958.3,288.7 961.3,292.6 964.3,296.6 967.3,300.5 970.3,304.4 973.3,308.4 976.3,312.3 979.2,316.3 982.2,320.2 985.2,324.1 988.2,328.1 991.2,332.0 994.2,335.8 997.2,339.7 1000.1,343.5 1003.1,347.3 1006.1,351.0 1009.1,354.8 1012.1,358.4 1015.1,362.1 1018.1,365.6 1021.1,369.2 1024.0,372.7 1027.0,376.1 1030.0,379.4 1033.0,382.7 1036.0,385.9 1039.0,389.1 1042.0,392.2 1044.9,395.2 1047.9,398.1 1050.9,401.0 1053.9,403.7 1056.9,406.4 1059.9,409.0 1062.9,411.5 1065.9,413.9 1068.8,416.2 1071.8,418.4 1074.8,420.5 1077.8,422.6 1080.8,424.5 1083.8,426.3 1086.8,428.0 1089.7,429.6 1092.7,431.0 1095.7,432.4 1098.7,433.7 1101.7,434.8 1104.7,435.9 1107.7,436.8 1110.6,437.6 1113.6,438.3 1116.6,438.8 1119.6,439.3 1122.6,439.6 1125.6,439.8 1128.6,439.9 1131.6,439.9 1134.5,439.8 1137.5,439.5 1140.5,439.1 1143.5,438.6 1146.5,438.0 1149.5,437.3 1152.5,436.4 1155.4,435.5 1158.4,434.4 1161.4,433.2 1164.4,431.9 1167.4,430.5 1170.4,429.0 1173.4,427.3 1176.4,425.6 1179.3,423.7 1182.3,421.8 1185.3,419.7 1188.3,417.6 1191.3,415.3 1194.3,413.0 1197.3,410.5 1200.2,408.0 1203.2,405.4 1206.2,402.7 1209.2,399.9 1212.2,397.0 1215.2,394.0 1218.2,391.0 1221.1,387.9 1224.1,384.7 1227.1,381.5 1230.1,378.1 1233.1,374.8 1236.1,371.3 1239.1,367.8 1242.1,364.3 1245.0,360.7 1248.0,357.0 1251.0,353.3 1254.0,349.6 1257.0,345.8 1260.0,342.0 1263.0,338.2 1265.9,334.3 1268.9,330.5 1271.9,326.6 1274.9,322.6 1277.9,318.7 1280.9,314.8 1283.9,310.8 1286.9,306.9 1289.8,302.9 1292.8,299.0 1295.8,295.1 1298.8,291.1 1301.8,287.2 1304.8,283.3 1307.8,279.5 1310.7,275.6 1313.7,271.8 1316.7,268.1 1319.7,264.3 1322.7,260.6 1325.7,257.0 1328.7,253.4 1331.7,249.8 1334.6,246.3 1337.6,242.8 1340.6,239.5 1343.6,236.1 1346.6,232.9 1349.6,229.7 1352.6,226.6 1355.5,223.5 1358.5,220.5 1361.5,217.6 1364.5,214.8 1367.5,212.1 1370.5,209.5 1373.5,206.9 1376.4,204.5 1379.4,202.1 1382.4,199.8 1385.4,197.7 1388.4,195.6 1391.4,193.6 1394.4,191.8 1397.4,190.0 1400.3,188.4 1403.3,186.8 1406.3,185.4 1409.3,184.1" fill="none" stroke="#de0000" stroke-width="1"/></svg>
<span class="t" style="left:11.59px;top:147.17px;font-family:'Liberation Sans',sans-serif;font-weight:normal;font-size:10.20px;color:#d2d2d2;transform:scaleX(0.9700);transform-origin:0 0;-webkit-text-stroke:0.2px #d2d2d2;">10V</span>
<span class="t" style="left:17.10px;top:179.62px;font-family:'Liberation Sans',sans-serif;font-weight:normal;font-size:10.20px;color:#d2d2d2;transform:scaleX(0.9700);transform-origin:0 0;-webkit-text-stroke:0.2px #d2d2d2;">8V</span>
<span class="t" style="left:17.10px;top:212.06px;font-family:'Liberation Sans',sans-serif;font-weight:normal;font-size:10.20px;color:#d2d2d2;transform:scaleX(0.9700);transform-origin:0 0;-webkit-text-stroke:0.2px #d2d2d2;">6V</span>
<span class="t" style="left:17.10px;top:244.50px;font-family:'Liberation Sans',sans-serif;font-weight:normal;font-size:10.20px;color:#d2d2d2;transform:scaleX(0.9700);transform-origin:0 0;-webkit-text-stroke:0.2px #d2d2d2;">4V</span>
<span class="t" style="left:17.10px;top:276.95px;font-family:'Liberation Sans',sans-serif;font-weight:normal;font-size:10.20px;color:#d2d2d2;transform:scaleX(0.9700);transform-origin:0 0;-webkit-text-stroke:0.2px #d2d2d2;">2V</span>
<span class="t" style="left:17.10px;top:309.39px;font-family:'Liberation Sans',sans-serif;font-weight:normal;font-size:10.20px;color:#d2d2d2;transform:scaleX(0.9700);transform-origin:0 0;-webkit-text-stroke:0.2px #d2d2d2;">0V</span>
<span class="t" style="left:13.80px;top:341.84px;font-family:'Liberation Sans',sans-serif;font-weight:normal;font-size:10.20px;color:#d2d2d2;transform:scaleX(0.9700);transform-origin:0 0;-webkit-text-stroke:0.2px #d2d2d2;">-2V</span>
<span class="t" style="left:13.80px;top:374.28px;font-family:'Liberation Sans',sans-serif;font-weight:normal;font-size:10.20px;color:#d2d2d2;transform:scaleX(0.9700);transform-origin:0 0;-webkit-text-stroke:0.2px #d2d2d2;">-4V</span>
<span class="t" style="left:13.80px;top:406.73px;font-family:'Liberation Sans',sans-serif;font-weight:normal;font-size:10.20px;color:#d2d2d2;transform:scaleX(0.9700);transform-origin:0 0;-webkit-text-stroke:0.2px #d2d2d2;">-6V</span>
<span class="t" style="left:13.80px;top:439.17px;font-family:'Liberation Sans',sans-serif;font-weight:normal;font-size:10.20px;color:#d2d2d2;transform:scaleX(0.9700);transform-origin:0 0;-webkit-text-stroke:0.2px #d2d2d2;">-8V</span>
<span class="t" style="left:15.40px;top:451.04px;font-family:'Liberation Sans',sans-serif;font-weight:normal;font-size:10.00px;color:#d2d2d2;-webkit-text-stroke:0.2px #d2d2d2;">931.0ms</span>
<span class="t" style="left:140.09px;top:451.04px;font-family:'Liberation Sans',sans-serif;font-weight:normal;font-size:10.00px;color:#d2d2d2;-webkit-text-stroke:0.2px #d2d2d2;">931.2ms</span>
<span class="t" style="left:264.98px;top:451.04px;font-family:'Liberation Sans',sans-serif;font-weight:normal;font-size:10.00px;color:#d2d2d2;-webkit-text-stroke:0.2px #d2d2d2;">931.4ms</span>
<span class="t" style="left:389.87px;top:451.04px;font-family:'Liberation Sans',sans-serif;font-weight:normal;font-size:10.00px;color:#d2d2d2;-webkit-text-stroke:0.2px #d2d2d2;">931.6ms</span>
<span class="t" style="left:514.76px;top:451.04px;font-family:'Liberation Sans',sans-serif;font-weight:normal;font-size:10.00px;color:#d2d2d2;-webkit-text-stroke:0.2px #d2d2d2;">931.8ms</span>
<span class="t" style="left:639.65px;top:451.04px;font-family:'Liberation Sans',sans-serif;font-weight:normal;font-size:10.00px;color:#d2d2d2;-webkit-text-stroke:0.2px #d2d2d2;">932.0ms</span>
<span class="t" style="left:764.55px;top:451.04px;font-family:'Liberation Sans',sans-serif;font-weight:normal;font-size:10.00px;color:#d2d2d2;-webkit-text-stroke:0.2px #d2d2d2;">932.2ms</span>
<span class="t" style="left:889.44px;top:451.04px;font-family:'Liberation Sans',sans-serif;font-weight:normal;font-size:10.00px;color:#d2d2d2;-webkit-text-stroke:0.2px #d2d2d2;">932.4ms</span>
<span class="t" style="left:1014.33px;top:451.04px;font-family:'Liberation Sans',sans-serif;font-weight:normal;font-size:10.00px;color:#d2d2d2;-webkit-text-stroke:0.2px #d2d2d2;">932.6ms</span>
<span class="t" style="left:1139.22px;top:451.04px;font-family:'Liberation Sans',sans-serif;font-weight:normal;font-size:10.00px;color:#d2d2d2;-webkit-text-stroke:0.2px #d2d2d2;">932.8ms</span>
<span class="t" style="left:1264.11px;top:451.04px;font-family:'Liberation Sans',sans-serif;font-weight:normal;font-size:10.00px;color:#d2d2d2;-webkit-text-stroke:0.2px #d2d2d2;">933.0ms</span>
<span class="t" style="left:1388.80px;top:451.04px;font-family:'Liberation Sans',sans-serif;font-weight:normal;font-size:10.00px;color:#d2d2d2;-webkit-text-stroke:0.2px #d2d2d2;">933.2ms</span>
<span class="t" style="left:707.10px;top:139.47px;font-family:'Liberation Sans',sans-serif;font-weight:bold;font-size:10.20px;color:#f01010;transform:scaleX(0.9573);transform-origin:0 0;">V(out)</span>
<div class="a" style="left:7px;top:464.2px;width:1425px;height:345.7px;background:#d4d0c8;box-shadow:inset 0.8px 0.8px 0 #e4e2dc, inset 1.6px 1.6px 0 #fff, inset -0.8px -0.8px 0 #55534f, inset -1.6px -1.6px 0 #8c8a84;"></div>
<div class="a" style="left:11px;top:466.5px;width:1417.4px;height:13.7px;background:linear-gradient(90deg,#808080 0%,#c0c0c0 100%);"></div>
<div class="a" style="left:1416.4px;top:467.7px;width:11.0px;height:10.3px;background:#d4d0c8;box-shadow:inset 0.7px 0.7px 0 #fff, inset -0.7px -0.7px 0 #404040, inset -1.4px -1.4px 0 #808080;"></div><div class="a" style="left:1403.6px;top:467.7px;width:11.0px;height:10.3px;background:#d4d0c8;box-shadow:inset 0.7px 0.7px 0 #fff, inset -0.7px -0.7px 0 #404040, inset -1.4px -1.4px 0 #808080;"></div><div class="a" style="left:1391.3px;top:467.7px;width:11.0px;height:10.3px;background:#d4d0c8;box-shadow:inset 0.7px 0.7px 0 #fff, inset -0.7px -0.7px 0 #404040, inset -1.4px -1.4px 0 #808080;"></div><svg style="left:1391.3px;top:467.7px" width="36.1" height="10.3" viewBox="1391.3 467.7 36.1 10.3" ><path d="M1419.2 470.3 l5 5 M1424.2 470.3 l-5 5" stroke="#000" stroke-width="1.3" fill="none"/><rect x="1405.9" y="469.9" width="6.2" height="5.6" fill="none" stroke="#000" stroke-width="0.8"/><rect x="1405.9" y="469.5" width="6.2" height="1.5" fill="#000"/><rect x="1393.9" y="474.5" width="4.4" height="1.4" fill="#000"/></svg>
<div class="a" style="left:11.6px;top:481px;width:1416.4px;height:325.4px;background:#c0c0c0;box-shadow:inset 0.9px 0.9px 0 #555;"></div>
<span class="t" style="left:25.60px;top:470.30px;font-family:'DejaVu Sans','Liberation Sans',sans-serif;font-weight:normal;font-size:7.80px;color:#d4d0c8;letter-spacing:0.402px;">bokarev_08.asc</span>
<svg style="left:11px;top:466px" width="445" height="341" viewBox="11 466 445 341" ><g transform="translate(13.4,467.4)" stroke="#1010f0" fill="none" stroke-width="1"><path d="M0 5 H3.6 M3.6 1.6 V8.6 M3.6 3.6 L7 0 M3.6 6.4 L8 10.6"/><path d="M8.2 10.8 L5.2 9.6 L7 7.6 Z" fill="#1010f0"/></g><path d="M125 497 L125 486.4 L397.4 486.4 L397.4 573 M397.4 590.4 L397.4 738.2 M397.4 755.8 L397.4 803.4 L179 803.4 L179 788 M125 515.6 L125 531 M125 558 L125 591 M125 609.6 L125 629 M119.7 629 H130.3 L125 635 Z M152 544.4 L152 571 L125 571 M152 544.4 L268 544.4 M179 486.4 L179 497 M179 515.6 L179 531 M179 522.6 L205 522.6 L205 550.6 M205 569.2 L205 584.4 L179 584.4 M179 558 L179 622.4 M179 640.6 L179 678.6 M179 593.4 L218.4 593.4 L218.4 608.6 M218.4 611.8 L218.4 629 M213.1 629 H223.7 L218.4 635 Z M227.4 486.4 L227.4 516.4 M227.4 519.6 L227.4 544.4 M245.6 544.4 L245.6 571 L259.4 571 M266.4 571 L281 571 M281 486.4 L281 497 M281 515.6 L281 531 M281 558 L281 581 M281 588 L281 622.6 M281 625.8 L281 656.4 M281 598 L292.4 598 M310.8 598 L326 598 M339 585 L339 486.4 M339 612 L339 622.4 M339 640.8 L339 732 M317 598 L317 700.4 L290 700.4 M179 656.4 L220.4 656.4 M238.8 656.4 L339 656.4 M214 656.4 L214 682.4 L231 682.4 M233.2 682.4 L249.6 682.4 L249.6 656.4 M339 665.4 L347.4 665.4 M347.4 661.4 H362.6 L366.6 665.4 L362.6 669.4 H347.4 Z M339 682.4 L358.6 682.4 M377 682.4 L397.4 682.4 M397.4 691.4 L419.6 691.4 L419.6 705 M414.3 705 H424.9 L419.6 711 Z M134 691.4 L165.6 691.4 M179 705 L179 769.4 M179 714 L276.6 714 M80.4 711 L80.4 691.4 L111 691.4 M113.2 691.4 L134 691.4 M80.4 728.8 L80.4 745 M75.1 745 H85.7 L80.4 751 Z M134 691.4 L134 707 M134 725.6 L134 745 M128.7 745 H139.3 L134 751 Z M258.6 714 L258.6 682.4 L275 682.4 M277.2 682.4 L317 682.4 M290 727.4 L290 769.4 M290 788 L290 803.4 M290 745.4 L326 745.4 M339 759 L339 769.4 M339 788 L339 803.4" fill="none" stroke="#1414f4" stroke-width="0.9"/><path d="M121.5 497 h7 v18.6 h-7 Z M138 535.6 V553.6 M125 531 L138 540 M138 549 L125 558 M138 544.4 H152 M127.6 532.8 L133.6 534.6 L131.8 537.4 Z M121.5 591 h7 v18.6 h-7 Z M175.5 497 h7 v18.6 h-7 Z M165.6 535.6 V553.6 M165.6 540 L179 531 M165.6 549 L179 558 M176.4 532.8 L170.4 534.6 L172.2 537.4 Z M201.5 550.6 h7 v18.6 h-7 Z M175.5 622 h7 v18.6 h-7 Z M213.6 608.8 H223.2 M213.6 613 Q218.4 610.4 223.2 613 M220.4 615.4 h1.8 m-0.9 -0.9 v1.8 M222.6 516.6 H232.2 M222.6 521 Q227.4 518.2 232.2 521 M224 513.8 h1.8 m-0.9 -0.9 v1.8 M259.4 567.2 V574.8 L266.2 571 Z M266.4 567.2 V574.8 M277.5 497 h7 v18.6 h-7 Z M268 535.6 V553.6 M268 540 L281 531 M268 549 L281 558 M278.6 532.6 L272.6 534.4 L274.4 537.4 Z M277.2 588 H284.8 L281 581.2 Z M277.2 581 H284.8 M276.2 622.8 H285.8 M276.2 627.2 Q281 624.4 285.8 627.2 M277.6 620 h1.8 m-0.9 -0.9 v1.8 M292.4 594.5 h18.4 v7 h-18.4 Z M326 589 V607 M326 593.6 L339 585 M326 602.4 L339 612 M328.4 603.4 L334.6 605.4 L332.4 608.4 Z M335.5 622.2 h7 v18.6 h-7 Z M220.4 652.9 h18.4 v7 h-18.4 Z M231 678.6 V686.2 M233.2 678.6 V686.2 M358.6 678.9 h18.4 v7 h-18.4 Z M405.8 581.6 A8.6 8.6 0 1 1 388.6 581.6 A8.6 8.6 0 1 1 405.8 581.6 M395 577.2 h4.4 M394.8 586.8 h4.8 m-2.4 -2.4 v4.8 M405.8 747 A8.6 8.6 0 1 1 388.6 747 A8.6 8.6 0 1 1 405.8 747 M395 742.6 h4.4 M394.8 752.2 h4.8 m-2.4 -2.4 v4.8 M165.6 682 V700.4 M165.6 687 L179 678.6 M165.6 695.6 L179 705 M176.4 680.2 L170.4 682 L172.2 685 Z M175.5 769.4 h7 v18.6 h-7 Z M111 686.4 V696.6 M113.2 686.4 V696.6 M89 720 A8.6 8.6 0 1 1 71.8 720 A8.6 8.6 0 1 1 89 720 M78 715.6 h4.8 m-2.4 -2.4 v4.8 M78.2 725 h4.4 M130.5 707 h7 v18.6 h-7 Z M275 678.6 V686.2 M277.2 678.6 V686.2 M276.6 704.4 V723 M276.6 709.4 L290 700.4 M276.6 718 L290 727.4 M279.2 719 L285.4 721 L283.2 724 Z M286.5 769.4 h7 v18.6 h-7 Z M326 736 V754.4 M326 741 L339 732 M326 749.6 L339 759 M328.4 750.6 L334.6 752.6 L332.4 755.6 Z M335.5 769.4 h7 v18.6 h-7 Z" fill="none" stroke="#20208c" stroke-width="0.9"/><rect x="123.7" y="569.7" width="2.6" height="2.6" fill="#1414f4"/><rect x="150.7" y="543.1" width="2.6" height="2.6" fill="#1414f4"/><rect x="159.7" y="543.1" width="2.6" height="2.6" fill="#1414f4"/><rect x="226.1" y="543.1" width="2.6" height="2.6" fill="#1414f4"/><rect x="244.3" y="543.1" width="2.6" height="2.6" fill="#1414f4"/><rect x="177.7" y="485.1" width="2.6" height="2.6" fill="#1414f4"/><rect x="177.7" y="521.3" width="2.6" height="2.6" fill="#1414f4"/><rect x="177.7" y="583.1" width="2.6" height="2.6" fill="#1414f4"/><rect x="177.7" y="592.1" width="2.6" height="2.6" fill="#1414f4"/><rect x="226.1" y="485.1" width="2.6" height="2.6" fill="#1414f4"/><rect x="279.7" y="569.7" width="2.6" height="2.6" fill="#1414f4"/><rect x="279.7" y="485.1" width="2.6" height="2.6" fill="#1414f4"/><rect x="279.7" y="596.7" width="2.6" height="2.6" fill="#1414f4"/><rect x="315.7" y="596.7" width="2.6" height="2.6" fill="#1414f4"/><rect x="337.7" y="485.1" width="2.6" height="2.6" fill="#1414f4"/><rect x="315.7" y="681.1" width="2.6" height="2.6" fill="#1414f4"/><rect x="177.7" y="655.1" width="2.6" height="2.6" fill="#1414f4"/><rect x="212.7" y="655.1" width="2.6" height="2.6" fill="#1414f4"/><rect x="248.3" y="655.1" width="2.6" height="2.6" fill="#1414f4"/><rect x="279.7" y="655.1" width="2.6" height="2.6" fill="#1414f4"/><rect x="337.7" y="655.1" width="2.6" height="2.6" fill="#1414f4"/><rect x="337.7" y="664.1" width="2.6" height="2.6" fill="#1414f4"/><rect x="337.7" y="681.1" width="2.6" height="2.6" fill="#1414f4"/><rect x="396.1" y="681.1" width="2.6" height="2.6" fill="#1414f4"/><rect x="396.1" y="690.1" width="2.6" height="2.6" fill="#1414f4"/><rect x="132.7" y="690.1" width="2.6" height="2.6" fill="#1414f4"/><rect x="177.7" y="712.7" width="2.6" height="2.6" fill="#1414f4"/><rect x="257.3" y="712.7" width="2.6" height="2.6" fill="#1414f4"/><rect x="288.7" y="744.1" width="2.6" height="2.6" fill="#1414f4"/><rect x="288.7" y="802.1" width="2.6" height="2.6" fill="#1414f4"/><rect x="337.7" y="802.1" width="2.6" height="2.6" fill="#1414f4"/><path d="M415.6 777.7 H438.2" stroke="#f4f4f4" stroke-width="0.8"/><path d="M426.6 765 V777 M415 776.5 H438.6" stroke="#000" stroke-width="0.9"/><path d="M426.7 777 V793.4 L430.2 790.2 L432.6 795 L435 793.8 L432.8 789.2 H437.6 Z" fill="#fff" stroke="#000" stroke-width="1"/></svg>
<span class="t" style="left:130.00px;top:498.54px;font-family:'DejaVu Sans','Liberation Sans',sans-serif;font-weight:normal;font-size:7.40px;color:#26263e;transform:scaleX(0.8400);transform-origin:0 0;">R12</span>
<span class="t" style="left:130.00px;top:508.14px;font-family:'DejaVu Sans','Liberation Sans',sans-serif;font-weight:normal;font-size:7.40px;color:#26263e;transform:scaleX(0.8400);transform-origin:0 0;">2k</span>
<span class="t" style="left:183.60px;top:498.54px;font-family:'DejaVu Sans','Liberation Sans',sans-serif;font-weight:normal;font-size:7.40px;color:#26263e;transform:scaleX(0.8400);transform-origin:0 0;">R2</span>
<span class="t" style="left:183.60px;top:508.14px;font-family:'DejaVu Sans','Liberation Sans',sans-serif;font-weight:normal;font-size:7.40px;color:#26263e;transform:scaleX(0.8400);transform-origin:0 0;">1.71k</span>
<span class="t" style="left:229.40px;top:507.14px;font-family:'DejaVu Sans','Liberation Sans',sans-serif;font-weight:normal;font-size:7.40px;color:#26263e;transform:scaleX(0.8400);transform-origin:0 0;">C4</span>
<span class="t" style="left:229.60px;top:521.14px;font-family:'DejaVu Sans','Liberation Sans',sans-serif;font-weight:normal;font-size:7.40px;color:#26263e;transform:scaleX(0.8400);transform-origin:0 0;">100µ</span>
<span class="t" style="left:103.00px;top:537.74px;font-family:'DejaVu Sans','Liberation Sans',sans-serif;font-weight:normal;font-size:7.40px;color:#26263e;transform:scaleX(0.8400);transform-origin:0 0;">Q7</span>
<span class="t" style="left:104.40px;top:546.14px;font-family:'DejaVu Sans','Liberation Sans',sans-serif;font-weight:normal;font-size:7.40px;color:#26263e;transform:scaleX(0.8400);transform-origin:0 0;">MP37</span>
<span class="t" style="left:181.00px;top:532.54px;font-family:'DejaVu Sans','Liberation Sans',sans-serif;font-weight:normal;font-size:7.40px;color:#26263e;transform:scaleX(0.8400);transform-origin:0 0;">Q5</span>
<span class="t" style="left:180.60px;top:546.74px;font-family:'DejaVu Sans','Liberation Sans',sans-serif;font-weight:normal;font-size:7.40px;color:#26263e;transform:scaleX(0.8400);transform-origin:0 0;">MP37</span>
<span class="t" style="left:210.40px;top:551.54px;font-family:'DejaVu Sans','Liberation Sans',sans-serif;font-weight:normal;font-size:7.40px;color:#26263e;transform:scaleX(0.8400);transform-origin:0 0;">R14</span>
<span class="t" style="left:210.40px;top:561.74px;font-family:'DejaVu Sans','Liberation Sans',sans-serif;font-weight:normal;font-size:7.40px;color:#26263e;transform:scaleX(0.8400);transform-origin:0 0;">2.61k</span>
<span class="t" style="left:130.00px;top:592.14px;font-family:'DejaVu Sans','Liberation Sans',sans-serif;font-weight:normal;font-size:7.40px;color:#26263e;transform:scaleX(0.8400);transform-origin:0 0;">R13</span>
<span class="t" style="left:130.00px;top:602.14px;font-family:'DejaVu Sans','Liberation Sans',sans-serif;font-weight:normal;font-size:7.40px;color:#26263e;transform:scaleX(0.8400);transform-origin:0 0;">2k</span>
<span class="t" style="left:208.00px;top:600.54px;font-family:'DejaVu Sans','Liberation Sans',sans-serif;font-weight:normal;font-size:7.40px;color:#26263e;transform:scaleX(0.8400);transform-origin:0 0;">C3</span>
<span class="t" style="left:201.00px;top:614.14px;font-family:'DejaVu Sans','Liberation Sans',sans-serif;font-weight:normal;font-size:7.40px;color:#26263e;transform:scaleX(0.8400);transform-origin:0 0;">220µ</span>
<span class="t" style="left:183.60px;top:623.14px;font-family:'DejaVu Sans','Liberation Sans',sans-serif;font-weight:normal;font-size:7.40px;color:#26263e;transform:scaleX(0.8400);transform-origin:0 0;">R3</span>
<span class="t" style="left:183.60px;top:632.74px;font-family:'DejaVu Sans','Liberation Sans',sans-serif;font-weight:normal;font-size:7.40px;color:#26263e;transform:scaleX(0.8400);transform-origin:0 0;">200</span>
<span class="t" style="left:286.00px;top:498.54px;font-family:'DejaVu Sans','Liberation Sans',sans-serif;font-weight:normal;font-size:7.40px;color:#26263e;transform:scaleX(0.8400);transform-origin:0 0;">R10</span>
<span class="t" style="left:286.00px;top:508.14px;font-family:'DejaVu Sans','Liberation Sans',sans-serif;font-weight:normal;font-size:7.40px;color:#26263e;transform:scaleX(0.8400);transform-origin:0 0;">130</span>
<span class="t" style="left:252.40px;top:514.14px;font-family:'DejaVu Sans','Liberation Sans',sans-serif;font-weight:normal;font-size:7.40px;color:#26263e;transform:scaleX(0.8400);transform-origin:0 0;">Q6</span>
<span class="t" style="left:251.00px;top:522.54px;font-family:'DejaVu Sans','Liberation Sans',sans-serif;font-weight:normal;font-size:7.40px;color:#26263e;transform:scaleX(0.8400);transform-origin:0 0;">ECG101</span>
<span class="t" style="left:251.60px;top:547.14px;font-family:'DejaVu Sans','Liberation Sans',sans-serif;font-weight:normal;font-size:7.40px;color:#26263e;transform:scaleX(0.8400);transform-origin:0 0;">D2</span>
<span class="t" style="left:251.60px;top:557.14px;font-family:'DejaVu Sans','Liberation Sans',sans-serif;font-weight:normal;font-size:7.40px;color:#26263e;transform:scaleX(0.8400);transform-origin:0 0;">D311A</span>
<span class="t" style="left:257.00px;top:590.14px;font-family:'DejaVu Sans','Liberation Sans',sans-serif;font-weight:normal;font-size:7.40px;color:#26263e;transform:scaleX(0.8400);transform-origin:0 0;">D1</span>
<span class="t" style="left:257.60px;top:598.74px;font-family:'DejaVu Sans','Liberation Sans',sans-serif;font-weight:normal;font-size:7.40px;color:#26263e;transform:scaleX(0.8400);transform-origin:0 0;">D311A</span>
<span class="t" style="left:297.40px;top:586.74px;font-family:'DejaVu Sans','Liberation Sans',sans-serif;font-weight:normal;font-size:7.40px;color:#26263e;transform:scaleX(0.8400);transform-origin:0 0;">R9</span>
<span class="t" style="left:297.40px;top:601.74px;font-family:'DejaVu Sans','Liberation Sans',sans-serif;font-weight:normal;font-size:7.40px;color:#26263e;transform:scaleX(0.8400);transform-origin:0 0;">43</span>
<span class="t" style="left:344.00px;top:589.14px;font-family:'DejaVu Sans','Liberation Sans',sans-serif;font-weight:normal;font-size:7.40px;color:#26263e;transform:scaleX(0.8400);transform-origin:0 0;">Q4</span>
<span class="t" style="left:344.00px;top:599.54px;font-family:'DejaVu Sans','Liberation Sans',sans-serif;font-weight:normal;font-size:7.40px;color:#26263e;transform:scaleX(0.8400);transform-origin:0 0;">2N242</span>
<span class="t" style="left:382.40px;top:567.14px;font-family:'DejaVu Sans','Liberation Sans',sans-serif;font-weight:normal;font-size:7.40px;color:#26263e;transform:scaleX(0.8400);transform-origin:0 0;">V1</span>
<span class="t" style="left:383.00px;top:589.74px;font-family:'DejaVu Sans','Liberation Sans',sans-serif;font-weight:normal;font-size:7.40px;color:#26263e;transform:scaleX(0.8400);transform-origin:0 0;">15</span>
<span class="t" style="left:283.00px;top:614.14px;font-family:'DejaVu Sans','Liberation Sans',sans-serif;font-weight:normal;font-size:7.40px;color:#26263e;transform:scaleX(0.8400);transform-origin:0 0;">C6</span>
<span class="t" style="left:283.00px;top:627.74px;font-family:'DejaVu Sans','Liberation Sans',sans-serif;font-weight:normal;font-size:7.40px;color:#26263e;transform:scaleX(0.8400);transform-origin:0 0;">470µ</span>
<span class="t" style="left:344.00px;top:623.14px;font-family:'DejaVu Sans','Liberation Sans',sans-serif;font-weight:normal;font-size:7.40px;color:#26263e;transform:scaleX(0.8400);transform-origin:0 0;">R8</span>
<span class="t" style="left:344.00px;top:632.74px;font-family:'DejaVu Sans','Liberation Sans',sans-serif;font-weight:normal;font-size:7.40px;color:#26263e;transform:scaleX(0.8400);transform-origin:0 0;">1</span>
<span class="t" style="left:225.60px;top:644.14px;font-family:'DejaVu Sans','Liberation Sans',sans-serif;font-weight:normal;font-size:7.40px;color:#26263e;transform:scaleX(0.8400);transform-origin:0 0;">R4</span>
<span class="t" style="left:223.60px;top:659.74px;font-family:'DejaVu Sans','Liberation Sans',sans-serif;font-weight:normal;font-size:7.40px;color:#26263e;transform:scaleX(0.8400);transform-origin:0 0;">1.5k</span>
<span class="t" style="left:227.60px;top:671.14px;font-family:'DejaVu Sans','Liberation Sans',sans-serif;font-weight:normal;font-size:7.40px;color:#26263e;transform:scaleX(0.8400);transform-origin:0 0;">C2</span>
<span class="t" style="left:224.40px;top:686.74px;font-family:'DejaVu Sans','Liberation Sans',sans-serif;font-weight:normal;font-size:7.40px;color:#26263e;transform:scaleX(0.8400);transform-origin:0 0;">100p</span>
<span class="t" style="left:107.60px;top:679.14px;font-family:'DejaVu Sans','Liberation Sans',sans-serif;font-weight:normal;font-size:7.40px;color:#26263e;transform:scaleX(0.8400);transform-origin:0 0;">C5</span>
<span class="t" style="left:104.60px;top:695.74px;font-family:'DejaVu Sans','Liberation Sans',sans-serif;font-weight:normal;font-size:7.40px;color:#26263e;transform:scaleX(0.8400);transform-origin:0 0;">1.5µ</span>
<span class="t" style="left:176.60px;top:682.14px;font-family:'DejaVu Sans','Liberation Sans',sans-serif;font-weight:normal;font-size:7.40px;color:#26263e;transform:scaleX(0.8400);transform-origin:0 0;">MP37</span>
<span class="t" style="left:176.20px;top:692.14px;font-family:'DejaVu Sans','Liberation Sans',sans-serif;font-weight:normal;font-size:7.40px;color:#26263e;transform:scaleX(0.8400);transform-origin:0 0;">Q1</span>
<span class="t" style="left:86.40px;top:705.54px;font-family:'DejaVu Sans','Liberation Sans',sans-serif;font-weight:normal;font-size:7.40px;color:#26263e;transform:scaleX(0.8400);transform-origin:0 0;">V3</span>
<span class="t" style="left:86.40px;top:728.14px;font-family:'DejaVu Sans','Liberation Sans',sans-serif;font-weight:normal;font-size:7.40px;color:#26263e;transform:scaleX(0.8400);transform-origin:0 0;">SINE(0 1.2 1000)</span>
<span class="t" style="left:138.60px;top:707.74px;font-family:'DejaVu Sans','Liberation Sans',sans-serif;font-weight:normal;font-size:7.40px;color:#26263e;transform:scaleX(0.8400);transform-origin:0 0;">R1</span>
<span class="t" style="left:138.60px;top:718.14px;font-family:'DejaVu Sans','Liberation Sans',sans-serif;font-weight:normal;font-size:7.40px;color:#26263e;transform:scaleX(0.8400);transform-origin:0 0;">30k</span>
<span class="t" style="left:104.60px;top:752.14px;font-family:'DejaVu Sans','Liberation Sans',sans-serif;font-weight:normal;font-size:7.40px;color:#26263e;transform:scaleX(0.7648);transform-origin:0 0;">.tran 1</span>
<span class="t" style="left:102.60px;top:763.54px;font-family:'DejaVu Sans','Liberation Sans',sans-serif;font-weight:normal;font-size:7.40px;color:#26263e;transform:scaleX(0.7870);transform-origin:0 0;">.four 1000 20 V(out)</span>
<span class="t" style="left:183.60px;top:770.14px;font-family:'DejaVu Sans','Liberation Sans',sans-serif;font-weight:normal;font-size:7.40px;color:#26263e;transform:scaleX(0.8400);transform-origin:0 0;">R5</span>
<span class="t" style="left:183.60px;top:780.14px;font-family:'DejaVu Sans','Liberation Sans',sans-serif;font-weight:normal;font-size:7.40px;color:#26263e;transform:scaleX(0.8400);transform-origin:0 0;">680</span>
<span class="t" style="left:272.00px;top:671.14px;font-family:'DejaVu Sans','Liberation Sans',sans-serif;font-weight:normal;font-size:7.40px;color:#26263e;transform:scaleX(0.8400);transform-origin:0 0;">C1</span>
<span class="t" style="left:271.00px;top:686.74px;font-family:'DejaVu Sans','Liberation Sans',sans-serif;font-weight:normal;font-size:7.40px;color:#26263e;transform:scaleX(0.8400);transform-origin:0 0;">51p</span>
<span class="t" style="left:348.00px;top:661.94px;font-family:'DejaVu Sans','Liberation Sans',sans-serif;font-weight:normal;font-size:7.40px;color:#26263e;transform:scaleX(0.8400);transform-origin:0 0;">OUT</span>
<span class="t" style="left:362.40px;top:671.14px;font-family:'DejaVu Sans','Liberation Sans',sans-serif;font-weight:normal;font-size:7.40px;color:#26263e;transform:scaleX(0.8400);transform-origin:0 0;">R11</span>
<span class="t" style="left:366.00px;top:685.74px;font-family:'DejaVu Sans','Liberation Sans',sans-serif;font-weight:normal;font-size:7.40px;color:#26263e;transform:scaleX(0.8400);transform-origin:0 0;">8</span>
<span class="t" style="left:295.00px;top:705.54px;font-family:'DejaVu Sans','Liberation Sans',sans-serif;font-weight:normal;font-size:7.40px;color:#26263e;transform:scaleX(0.8400);transform-origin:0 0;">Q2</span>
<span class="t" style="left:295.00px;top:715.74px;font-family:'DejaVu Sans','Liberation Sans',sans-serif;font-weight:normal;font-size:7.40px;color:#26263e;transform:scaleX(0.8400);transform-origin:0 0;">AC151</span>
<span class="t" style="left:344.00px;top:736.74px;font-family:'DejaVu Sans','Liberation Sans',sans-serif;font-weight:normal;font-size:7.40px;color:#26263e;transform:scaleX(0.8400);transform-origin:0 0;">Q3</span>
<span class="t" style="left:344.00px;top:746.54px;font-family:'DejaVu Sans','Liberation Sans',sans-serif;font-weight:normal;font-size:7.40px;color:#26263e;transform:scaleX(0.8400);transform-origin:0 0;">2N242</span>
<span class="t" style="left:382.40px;top:732.14px;font-family:'DejaVu Sans','Liberation Sans',sans-serif;font-weight:normal;font-size:7.40px;color:#26263e;transform:scaleX(0.8400);transform-origin:0 0;">V2</span>
<span class="t" style="left:383.00px;top:754.54px;font-family:'DejaVu Sans','Liberation Sans',sans-serif;font-weight:normal;font-size:7.40px;color:#26263e;transform:scaleX(0.8400);transform-origin:0 0;">15</span>
<span class="t" style="left:295.00px;top:770.14px;font-family:'DejaVu Sans','Liberation Sans',sans-serif;font-weight:normal;font-size:7.40px;color:#26263e;transform:scaleX(0.8400);transform-origin:0 0;">R6</span>
<span class="t" style="left:295.00px;top:780.14px;font-family:'DejaVu Sans','Liberation Sans',sans-serif;font-weight:normal;font-size:7.40px;color:#26263e;transform:scaleX(0.8400);transform-origin:0 0;">43</span>
<span class="t" style="left:344.00px;top:770.14px;font-family:'DejaVu Sans','Liberation Sans',sans-serif;font-weight:normal;font-size:7.40px;color:#26263e;transform:scaleX(0.8400);transform-origin:0 0;">R7</span>
<span class="t" style="left:344.00px;top:780.14px;font-family:'DejaVu Sans','Liberation Sans',sans-serif;font-weight:normal;font-size:7.40px;color:#26263e;transform:scaleX(0.8400);transform-origin:0 0;">1</span>
<div class="a" style="left:7.8px;top:462px;width:1423.8px;height:4.5px;background:#d6d2ca;"></div>
<div class="a" style="left:8.6px;top:463.5px;width:1422.2px;height:1.7px;background:#f4f3ee;"></div>
<div class="a" style="left:454px;top:469.2px;width:980px;height:340.4px;background:#d4d0c8;box-shadow:inset 0.8px 0.8px 0 #e4e2dc, inset 1.6px 1.6px 0 #fff, inset 0 -0.8px 0 #8c8a84;"></div>
<div class="a" style="left:457px;top:472px;width:974px;height:14.2px;background:linear-gradient(90deg,#0a246a 0%,#a6caf0 100%);"></div>
<svg style="left:458.4px;top:472.8px" width="12" height="12" viewBox="0 0 12 12"><rect x="0.4" y="0" width="11.6" height="12" fill="#c0c0c0"/><path d="M0.6 0 V11" stroke="#222" stroke-width="0.8" stroke-dasharray="0.8 1"/><path d="M1 6.4 H12" stroke="#f01010" stroke-width="1.1" stroke-dasharray="1.6 0.9"/><path d="M0.6 9.4 H3.4 L4.4 8.8 H7 L8 9.6 H12" stroke="#1010a0" stroke-width="1.1" fill="none"/><path d="M0.6 11.4 H12" stroke="#222" stroke-width="0.9" stroke-dasharray="0.8 1"/></svg>
<span class="t" style="left:472.40px;top:476.30px;font-family:'DejaVu Sans','Liberation Sans',sans-serif;font-weight:normal;font-size:7.80px;color:#fff;letter-spacing:0.409px;">bokarev_08.fft</span>
<div class="a" style="left:1418.6px;top:473.4px;width:11.0px;height:10.3px;background:#d4d0c8;box-shadow:inset 0.7px 0.7px 0 #fff, inset -0.7px -0.7px 0 #404040, inset -1.4px -1.4px 0 #808080;"></div><div class="a" style="left:1405.8px;top:473.4px;width:11.0px;height:10.3px;background:#d4d0c8;box-shadow:inset 0.7px 0.7px 0 #fff, inset -0.7px -0.7px 0 #404040, inset -1.4px -1.4px 0 #808080;"></div><div class="a" style="left:1393.5px;top:473.4px;width:11.0px;height:10.3px;background:#d4d0c8;box-shadow:inset 0.7px 0.7px 0 #fff, inset -0.7px -0.7px 0 #404040, inset -1.4px -1.4px 0 #808080;"></div><svg style="left:1393.5px;top:473.4px" width="36.1" height="10.3" viewBox="1393.5 473.4 36.1 10.3" ><path d="M1421.4 476.0 l5 5 M1426.4 476.0 l-5 5" stroke="#000" stroke-width="1.3" fill="none"/><rect x="1408.1" y="475.6" width="6.2" height="5.6" fill="none" stroke="#000" stroke-width="0.8"/><rect x="1408.1" y="475.2" width="6.2" height="1.5" fill="#000"/><rect x="1396.1" y="480.2" width="4.4" height="1.4" fill="#000"/></svg>
<div class="a" style="left:457px;top:487.2px;width:974px;height:319.2px;background:#d4d0c8;box-shadow:inset 0.9px 0.9px 0 #6a6864, inset -0.9px -0.9px 0 #fff;"></div>
<div class="a" style="left:458px;top:488px;width:971.6px;height:317.2px;background:#000;"></div>
<svg style="left:458px;top:488px" width="972" height="317" viewBox="458 488 972 317" ><rect x="496.5" y="501.5" width="892" height="285" fill="none" stroke="#b4b4b4" stroke-width="0.8"/><path d="M491.4 501.50 H496.5 M491.4 525.25 H496.5 M491.4 549.00 H496.5 M491.4 572.75 H496.5 M491.4 596.50 H496.5 M491.4 620.25 H496.5 M491.4 644.00 H496.5 M491.4 667.75 H496.5 M491.4 691.50 H496.5 M491.4 715.25 H496.5 M491.4 739.00 H496.5 M491.4 762.75 H496.5 M491.4 786.50 H496.5 M538.63 786.5 v2.4 M594.46 786.5 v2.4 M637.77 786.5 v2.4 M673.16 786.5 v2.4 M703.07 786.5 v2.4 M728.99 786.5 v2.4 M751.85 786.5 v2.4 M906.83 786.5 v2.4 M985.53 786.5 v2.4 M1041.36 786.5 v2.4 M1084.67 786.5 v2.4 M1120.06 786.5 v2.4 M1149.97 786.5 v2.4 M1175.89 786.5 v2.4 M1198.75 786.5 v2.4 M1353.73 786.5 v2.4 M772.30 786.5 v5.6 M1219.20 786.5 v5.6 " stroke="#b4b4b4" stroke-width="0.8" fill="none"/><polyline points="497.3,616.7 503.5,619.2 511.9,625.8 519.2,617.1 526.5,628.5 532.7,629.6 546.2,616.7 552.5,615.0 558.8,619.2 564.0,618.1 569.6,623.8 579.6,623.3 585.2,615.4 590.4,627.9 594.2,619.2 600.0,614.4 605.0,620.2 609.8,619.8 617.7,627.1 622.3,619.2 626.5,616.0 630.6,624.4 635.8,619.2 642.1,616.5 646.7,625.4 649.4,619.2 652.9,615.0 657.7,623.3 660.8,622.3 664.0,614.6 667.1,632.7 670.2,614.0 674.4,618.1 678.1,616.0 680.6,619.2 683.3,632.3 686.9,632.3 695.2,612.9 700.4,621.2 703.5,621.9 706.7,615.6 708.8,621.2 711.5,616.7 714.6,629.2 719.2,619.2 721.9,621.2 725.0,617.5 727.1,619.2 729.6,638.3 732.1,624.4 734.8,625.4 739.0,620.8 743.1,625.4 745.2,634.8 748.3,640.4 750.4,621.2 752.1,623.3 754.6,628.5 757.1,619.2 758.8,621.7 760.8,617.1 762.9,635.4 764.6,623.3 766.2,634.8 768.1,619.2 769.6,617.1 770.6,628.5 768.8,637.6 770.5,590.6 772.3,507.0 774.0,590.6 775.8,618.9 777.5,624.1 779.2,620.5 780.8,627.9 782.5,620.3 784.2,626.2 785.8,625.4 787.4,636.0 789.0,613.5 790.6,618.2 792.2,615.4 793.8,618.8 795.3,631.5 796.9,617.9 798.4,620.5 799.9,623.5 801.4,619.8 802.9,628.8 804.4,629.3 805.9,623.8 807.4,623.4 808.8,617.4 810.3,630.7 811.7,620.0 813.1,628.8 814.5,630.6 815.9,636.1 817.3,633.7 818.7,617.7 820.1,620.0 821.4,621.1 822.8,623.5 824.1,621.5 825.4,621.7 826.8,616.2 828.1,619.5 829.4,622.3 830.7,629.3 832.0,627.6 833.3,626.5 834.5,623.0 835.8,648.3 837.0,629.1 838.3,619.7 839.5,623.6 840.8,620.1 842.0,625.1 843.2,618.9 844.4,626.7 845.6,630.0 846.8,624.0 848.0,625.5 849.2,626.9 850.3,624.7 851.5,622.5 852.7,631.3 853.8,626.4 855.0,623.2 856.1,621.3 857.2,627.1 858.4,625.0 859.5,621.8 860.6,633.1 861.7,619.5 862.8,618.7 863.9,622.9 865.0,625.0 866.1,621.2 867.1,635.2 868.2,614.3 869.3,618.4 870.3,634.1 871.4,625.0 872.4,624.9 873.5,613.3 874.5,614.1 875.5,621.6 876.5,631.5 877.6,628.0 878.6,622.6 879.6,636.2 880.6,617.8 881.6,620.4 882.6,631.1 883.6,624.8 884.5,617.2 885.5,610.3 886.5,613.5 887.5,618.0 888.4,616.5 889.4,618.3 890.3,625.5 891.3,617.8 892.2,625.4 893.2,634.7 894.1,614.5 895.0,615.5 896.0,636.9 896.9,632.5 897.8,616.2 898.7,619.4 899.6,628.7 900.5,629.4 901.4,614.1 902.3,625.6 903.2,620.8 904.1,625.7 905.0,617.8 905.9,619.9 906.7,571.0 907.6,615.0 908.5,620.5 909.3,619.4 910.2,618.2 911.1,639.1 911.9,617.5 912.8,620.4 913.6,624.9 914.4,613.1 915.3,623.0 916.1,619.0 916.9,619.1 917.8,615.2 918.6,635.5 919.4,615.2 920.2,622.4 921.0,622.1 921.9,625.1 922.7,620.1 923.5,618.1 924.3,622.7 925.1,619.3 925.9,619.5 926.6,618.4 927.4,614.8 928.2,618.9 929.0,619.8 929.8,623.0 930.6,620.9 931.3,630.9 932.1,626.0 932.9,639.4 933.6,618.5 934.4,625.0 935.1,621.2 935.9,626.1 936.6,624.5 937.4,624.6 938.1,620.5 938.9,622.7 939.6,623.8 940.3,622.0 941.1,621.7 941.8,630.9 942.5,622.1 943.3,620.5 944.0,627.9 944.7,626.8 945.4,627.1 946.1,622.6 946.9,624.3 947.6,632.6 948.3,632.6 949.0,620.5 949.7,629.4 950.4,629.4 951.1,631.0 951.8,627.5 952.5,628.5 953.1,623.6 953.8,624.7 954.5,621.6 955.2,634.6 955.9,646.4 956.6,631.8 957.2,631.9 957.9,627.4 958.6,626.1 959.2,630.0 959.9,632.9 960.6,624.5 961.2,623.8 961.9,634.7 962.5,624.9 963.2,629.3 963.9,624.8 964.5,619.9 965.1,629.4 965.8,642.5 966.4,627.2 967.1,630.6 967.7,623.7 968.4,625.9 969.0,631.1 969.6,620.9 970.3,637.9 970.9,619.6 971.5,629.7 972.1,621.1 972.8,638.7 973.4,623.8 974.0,617.8 974.6,624.4 975.2,633.0 975.8,621.3 976.5,620.3 977.1,617.9 977.7,629.1 978.3,626.5 978.9,630.3 979.5,623.2 980.1,631.2 980.7,630.6 981.3,630.9 981.9,622.9 982.5,617.2 983.1,620.9 983.6,625.4 984.2,628.7 984.8,617.4 985.4,569.0 986.0,629.1 986.6,622.3 987.1,624.7 987.7,620.6 988.3,631.3 988.9,630.8 989.4,619.5 990.0,621.8 990.6,627.1 991.1,621.4 991.7,622.9 992.3,622.5 992.8,625.5 993.4,627.0 993.9,621.0 994.5,624.5 995.1,632.3 995.6,622.7 996.2,623.8 996.7,618.1 997.3,617.3 997.8,619.9 998.4,629.0 998.9,622.2 999.4,632.7 1000.0,617.4 1000.5,627.9 1001.1,627.2 1001.6,642.5 1002.1,628.7 1002.7,639.4 1003.2,632.8 1003.7,634.5 1004.3,630.6 1004.8,624.4 1005.3,622.3 1005.8,619.2 1006.4,630.8 1006.9,626.0 1007.4,625.4 1007.9,626.1 1008.4,624.0 1009.0,625.6 1009.5,633.7 1010.0,632.1 1010.5,626.1 1011.0,621.4 1011.5,627.0 1012.0,631.0 1012.5,617.5 1013.0,624.3 1013.5,621.8 1014.1,625.4 1014.6,626.3 1015.1,628.3 1015.6,616.2 1016.1,624.4 1016.5,618.9 1017.0,621.6 1017.5,618.1 1018.0,622.9 1018.5,634.9 1019.0,628.4 1019.5,620.9 1020.0,624.4 1020.5,617.1 1021.0,620.8 1021.4,624.0 1021.9,617.6 1022.4,618.2 1022.9,630.4 1023.4,623.8 1023.9,623.3 1024.3,617.1 1024.8,620.4 1025.3,623.2 1025.8,615.9 1026.2,613.6 1026.7,619.7 1027.2,618.2 1027.6,622.7 1028.1,616.4 1028.6,629.4 1029.0,622.7 1029.5,621.4 1030.0,613.1 1030.4,618.4 1030.9,619.4 1031.4,625.9 1031.8,618.3 1032.3,618.7 1032.7,615.6 1033.2,623.0 1033.6,616.9 1034.1,615.5 1034.5,625.3 1035.0,625.3 1035.4,617.9 1035.9,614.4 1036.3,613.8 1036.8,628.4 1037.2,614.5 1037.7,624.0 1038.1,628.7 1038.6,618.8 1039.0,622.5 1039.5,624.2 1039.9,624.0 1040.3,622.9 1040.8,630.0 1041.2,575.4 1041.7,614.5 1042.1,625.9 1042.5,618.9 1043.0,621.8 1043.4,619.5 1043.8,623.1 1044.3,617.8 1044.7,619.3 1045.1,638.5 1045.5,620.8 1046.0,634.6 1046.4,620.2 1046.8,620.9 1047.2,638.2 1047.7,618.7 1048.1,623.4 1048.5,627.1 1048.9,620.6 1049.3,620.3 1049.8,624.0 1050.2,622.4 1050.6,626.1 1051.0,620.2 1051.4,630.7 1051.8,625.8 1052.3,620.0 1052.7,617.9 1053.1,630.3 1053.5,623.1 1053.9,623.0 1054.3,623.1 1054.7,620.0 1055.1,620.2 1055.5,619.1 1055.9,624.6 1056.3,628.8 1056.7,645.3 1057.1,630.5 1057.6,630.6 1058.0,631.6 1058.4,617.8 1058.8,624.2 1059.2,632.6 1059.5,621.0 1059.9,636.2 1060.3,636.6 1060.7,615.5 1061.1,635.5 1061.5,628.3 1061.9,622.4 1062.3,621.0 1062.7,633.6 1063.1,632.6 1063.5,624.9 1063.9,624.4 1064.3,626.1 1064.7,628.8 1065.0,623.0 1065.4,624.6 1065.8,637.7 1066.2,628.0 1066.6,632.7 1067.0,623.0 1067.3,621.1 1067.7,628.5 1068.1,624.2 1068.5,635.5 1068.9,626.6 1069.2,628.9 1069.6,636.0 1070.0,628.3 1070.4,629.7 1070.8,630.0 1071.1,651.8 1071.5,643.9 1071.9,632.7 1072.2,636.6 1072.6,623.6 1073.0,623.6 1073.4,648.2 1073.7,639.5 1074.1,617.6 1074.5,625.9 1074.8,636.8 1075.2,636.7 1075.6,631.0 1075.9,628.8 1076.3,627.3 1076.7,622.8 1077.0,630.7 1077.4,636.3 1077.8,624.2 1078.1,624.0 1078.5,624.9 1078.8,625.5 1079.2,625.4 1079.6,643.6 1079.9,621.7 1080.3,631.2 1080.6,623.2 1081.0,635.1 1081.3,628.5 1081.7,630.4 1082.1,622.6 1082.4,631.5 1082.8,621.6 1083.1,619.5 1083.5,623.2 1083.8,631.7 1084.2,631.3 1084.5,581.6 1084.9,624.1 1085.2,631.7 1085.6,631.8 1085.9,644.4 1086.3,630.7 1086.6,630.5 1086.9,634.2 1087.3,623.5 1087.6,630.2 1088.0,627.1 1088.3,624.6 1088.7,626.6 1089.0,625.7 1089.3,643.5 1089.7,623.5 1090.0,635.0 1090.4,634.1 1090.7,625.7 1091.0,631.8 1091.4,629.7 1091.7,625.6 1092.1,639.2 1092.4,623.2 1092.7,636.7 1093.1,621.3 1093.4,629.1 1093.7,624.2 1094.1,632.1 1094.4,646.5 1094.7,632.7 1095.1,632.6 1095.4,625.0 1095.7,637.2 1096.1,627.6 1096.4,624.3 1096.7,631.5 1097.0,627.5 1097.4,623.3 1097.7,631.3 1098.0,631.4 1098.3,626.1 1098.7,628.5 1099.0,631.4 1099.3,635.5 1099.6,634.2 1100.0,629.9 1100.3,639.5 1100.6,628.5 1100.9,623.1 1101.3,626.9 1101.6,630.7 1101.9,637.3 1102.2,622.9 1102.5,628.9 1102.9,637.9 1103.2,625.3 1103.5,635.9 1103.8,627.1 1104.1,629.0 1104.4,626.7 1104.7,630.2 1105.1,623.1 1105.4,637.9 1105.7,630.3 1106.0,636.5 1106.3,643.2 1106.6,646.9 1106.9,637.0 1107.3,632.4 1107.6,634.9 1107.9,631.0 1108.2,636.0 1108.5,643.8 1108.8,627.3 1109.1,637.7 1109.4,628.7 1109.7,627.9 1110.0,625.3 1110.3,629.4 1110.6,631.6 1110.9,637.1 1111.3,640.5 1111.6,636.3 1111.9,632.0 1112.2,634.5 1112.5,628.5 1112.8,635.6 1113.1,625.5 1113.4,627.0 1113.7,631.6 1114.0,626.4 1114.3,623.8 1114.6,629.4 1114.9,629.0 1115.2,647.3 1115.5,625.9 1115.8,623.8 1116.1,635.6 1116.4,642.3 1116.7,633.0 1117.0,642.1 1117.3,638.4 1117.5,625.5 1117.8,628.7 1118.1,631.4 1118.4,630.9 1118.7,627.6 1119.0,631.4 1119.3,622.3 1119.6,621.1 1119.9,638.7 1120.2,582.8 1120.5,635.7 1120.8,633.5 1121.1,629.9 1121.3,630.5 1121.6,628.0 1121.9,645.9 1122.2,629.3 1122.5,629.5 1122.8,624.0 1123.1,626.1 1123.4,624.9 1123.6,624.9 1123.9,627.0 1124.2,623.2 1124.5,620.8 1124.8,632.5 1125.1,625.1 1125.4,631.7 1125.6,626.7 1125.9,626.5 1126.2,625.9 1126.5,623.6 1126.8,628.0 1127.0,632.0 1127.3,623.3 1127.6,625.9 1127.9,627.7 1128.2,621.2 1128.4,637.0 1128.7,618.6 1129.0,628.4 1129.3,631.1 1129.6,627.0 1129.8,628.1 1130.1,616.2 1130.4,629.7 1130.7,622.2 1130.9,631.3 1131.2,628.3 1131.5,621.1 1131.8,626.8 1132.0,638.1 1132.3,627.4 1132.6,628.9 1132.9,619.5 1133.1,625.3 1133.4,625.1 1133.7,618.8 1133.9,622.5 1134.2,622.3 1134.5,627.2 1134.8,621.4 1135.0,626.8 1135.3,655.9 1135.6,630.7 1135.8,630.9 1136.1,624.4 1136.4,628.4 1136.6,649.1 1136.9,620.4 1137.2,625.8 1137.4,624.7 1137.7,637.2 1138.0,616.9 1138.2,625.5 1138.5,622.0 1138.8,623.3 1139.0,635.4 1139.3,627.2 1139.6,625.5 1139.8,633.2 1140.1,624.1 1140.3,622.2 1140.6,626.7 1140.9,619.4 1141.1,625.4 1141.4,626.8 1141.6,621.0 1141.9,626.0 1142.2,621.3 1142.4,628.4 1142.7,628.9 1142.9,629.9 1143.2,628.6 1143.5,627.9 1143.7,627.7 1144.0,621.5 1144.2,619.2 1144.5,642.6 1144.7,634.5 1145.0,617.8 1145.3,616.6 1145.5,627.4 1145.8,629.1 1146.0,623.8 1146.3,625.3 1146.5,619.5 1146.8,622.9 1147.0,627.2 1147.3,623.4 1147.5,634.5 1147.8,622.9 1148.1,619.4 1148.3,620.8 1148.6,625.8 1148.8,626.7 1149.1,625.5 1149.3,638.6 1149.6,621.8 1149.8,630.4 1150.1,576.0 1150.3,626.1 1150.6,625.4 1150.8,622.0 1151.1,622.9 1151.3,622.3 1151.5,626.5 1151.8,630.1 1152.0,621.7 1152.3,630.7 1152.5,621.3 1152.8,619.9 1153.0,622.7 1153.3,620.8 1153.5,624.9 1153.8,623.5 1154.0,628.7 1154.3,632.3 1154.5,623.5 1154.7,622.9 1155.0,633.0 1155.2,625.4 1155.5,633.3 1155.7,627.6 1156.0,625.2 1156.2,625.5 1156.4,638.9 1156.7,624.7 1156.9,631.6 1157.2,635.3 1157.4,621.6 1157.6,626.2 1157.9,629.5 1158.1,635.7 1158.4,622.2 1158.6,629.0 1158.8,628.3 1159.1,628.3 1159.3,624.8 1159.5,624.8 1159.8,625.0 1160.0,625.9 1160.3,630.3 1160.5,619.7 1160.7,618.3 1161.0,629.3 1161.2,628.9 1161.4,620.8 1161.7,625.4 1161.9,622.7 1162.1,622.9 1162.4,624.3 1162.6,624.3 1162.8,621.4 1163.1,621.0 1163.3,617.8 1163.5,631.0 1163.8,628.9 1164.0,632.9 1164.2,618.8 1164.5,624.9 1164.7,631.6 1164.9,628.5 1165.2,620.8 1165.4,637.8 1165.6,628.1 1165.9,628.2 1166.1,637.9 1166.3,623.4 1166.5,621.1 1166.8,628.1 1167.0,623.5 1167.2,620.3 1167.5,620.8 1167.7,630.3 1167.9,623.7 1168.1,625.3 1168.4,626.6 1168.6,628.5 1168.8,621.1 1169.1,622.5 1169.3,623.6 1169.5,623.8 1169.7,626.3 1170.0,622.8 1170.2,631.6 1170.4,619.4 1170.6,627.8 1170.9,635.8 1171.1,638.1 1171.3,632.0 1171.5,627.3 1171.7,634.9 1172.0,630.7 1172.2,626.8 1172.4,628.0 1172.6,621.7 1172.9,641.0 1173.1,633.0 1173.3,625.6 1173.5,632.8 1173.7,622.0 1174.0,617.0 1174.2,627.5 1174.4,622.3 1174.6,621.0 1174.8,623.2 1175.1,627.8 1175.3,626.8 1175.5,623.4 1175.7,624.7 1175.9,582.8 1176.2,619.0 1176.4,625.8 1176.6,627.0 1176.8,619.4 1177.0,626.8 1177.2,621.8 1177.5,623.7 1177.7,623.6 1177.9,624.9 1178.1,617.0 1178.3,625.5 1178.5,620.6 1178.8,621.7 1179.0,623.0 1179.2,617.7 1179.4,624.2 1179.6,623.3 1179.8,618.8 1180.0,624.5 1180.3,632.3 1180.5,622.1 1180.7,623.6 1180.9,635.2 1181.1,637.9 1181.3,619.3 1181.5,627.2 1181.7,618.8 1182.0,628.2 1182.2,623.1 1182.4,620.4 1182.6,623.0 1182.8,634.6 1183.0,621.7 1183.2,624.4 1183.4,627.4 1183.6,623.1 1183.9,623.7 1184.1,620.3 1184.3,631.5 1184.5,624.2 1184.7,629.4 1184.9,618.0 1185.1,638.0 1185.3,626.8 1185.5,621.1 1185.7,627.5 1185.9,620.6 1186.1,621.2 1186.4,621.1 1186.6,627.6 1186.8,618.0 1187.0,621.6 1187.2,624.9 1187.4,621.5 1187.6,628.9 1187.8,624.8 1188.0,620.1 1188.2,617.8 1188.4,621.3 1188.6,621.9 1188.8,624.7 1189.0,627.9 1189.2,623.4 1189.4,616.5 1189.6,626.5 1189.8,632.2 1190.0,634.3 1190.2,621.3 1190.4,628.5 1190.6,636.5 1190.9,630.7 1191.1,629.3 1191.3,631.5 1191.5,623.1 1191.7,631.3 1191.9,629.4 1192.1,628.0 1192.3,631.1 1192.5,621.9 1192.7,622.0 1192.9,624.1 1193.1,626.3 1193.3,616.1 1193.5,626.4 1193.7,623.3 1193.9,627.4 1194.1,618.3 1194.3,626.5 1194.5,639.1 1194.7,623.2 1194.9,623.6 1195.0,627.2 1195.2,630.6 1195.4,624.4 1195.6,631.8 1195.8,639.6 1196.0,625.5 1196.2,624.4 1196.4,627.0 1196.6,626.2 1196.8,631.5 1197.0,625.0 1197.2,631.4 1197.4,624.3 1197.6,634.8 1197.8,629.3 1198.0,627.2 1198.2,629.9 1198.4,624.6 1198.6,620.8 1198.8,584.7 1199.0,618.8 1199.2,630.5 1199.4,628.5 1199.5,622.2 1199.7,638.3 1199.9,626.1 1200.1,632.0 1200.3,628.7 1200.5,623.5 1200.7,626.7 1200.9,622.2 1201.1,631.0 1201.3,625.9 1201.5,624.9 1201.7,639.3 1201.9,622.9 1202.0,620.0 1202.2,620.6 1202.4,622.9 1202.6,626.1 1202.8,622.8 1203.0,639.9 1203.2,626.0 1203.4,629.8 1203.6,625.7 1203.8,627.6 1203.9,629.3 1204.1,632.9 1204.3,632.7 1204.5,630.3 1204.7,629.5 1204.9,638.0 1205.1,640.9 1205.3,630.3 1205.4,633.0 1205.6,623.8 1205.8,632.0 1206.0,627.4 1206.2,627.5 1206.4,636.1 1206.6,633.0 1206.8,641.0 1206.9,632.6 1207.1,647.1 1207.3,629.1 1207.5,643.8 1207.7,631.9 1207.9,626.8 1208.1,633.6 1208.2,627.4 1208.4,629.0 1208.6,636.1 1208.8,629.2 1209.0,624.3 1209.2,621.0 1209.3,627.7 1209.5,630.3 1209.7,626.6 1209.9,645.5 1210.1,632.5 1210.3,623.1 1210.4,634.3 1210.6,632.2 1210.8,629.4 1211.0,626.5 1211.2,626.5 1211.4,635.7 1211.5,624.8 1211.7,627.0 1211.9,633.0 1212.1,643.0 1212.3,631.5 1212.4,644.8 1212.6,628.1 1212.8,632.8 1213.0,630.3 1213.2,634.0 1213.3,636.4 1213.5,626.1 1213.7,633.3 1213.9,624.6 1214.1,631.1 1214.2,639.0 1214.4,640.1 1214.6,630.6 1214.8,633.2 1215.0,624.9 1215.1,624.4 1215.3,635.8 1215.5,629.3 1215.7,630.2 1215.9,632.9 1216.0,637.6 1216.2,629.0 1216.4,645.1 1216.6,638.6 1216.7,631.1 1216.9,638.6 1217.1,642.7 1217.3,628.2 1217.4,636.1 1217.6,631.8 1217.8,630.1 1218.0,625.5 1218.1,626.2 1218.3,640.8 1218.5,626.7 1218.7,624.6 1218.9,627.7 1219.0,630.3 1219.2,587.5 1219.4,631.8 1219.5,624.1 1219.7,631.2 1219.9,626.3 1220.1,625.1 1220.2,626.7 1220.4,640.0 1220.6,624.3 1220.8,624.7 1220.9,629.8 1221.1,622.5 1221.3,634.3 1221.5,633.1 1221.6,630.3 1221.8,626.8 1222.0,623.3 1222.1,643.7 1222.3,627.0 1222.5,623.2 1222.7,628.9 1222.8,634.5 1223.0,629.8 1223.2,642.7 1223.3,627.0 1223.5,623.9 1223.7,632.2 1223.9,640.2 1224.0,635.8 1224.2,636.5 1224.4,631.7 1224.5,626.8 1224.7,633.6 1224.9,626.4 1225.0,627.6 1225.2,623.8 1225.4,624.1 1225.6,636.9 1225.7,620.5 1225.9,635.4 1226.1,637.4 1226.2,633.3 1226.4,622.6 1226.6,627.6 1226.7,625.8 1226.9,627.1 1227.1,627.2 1227.2,632.7 1227.4,628.7 1227.6,618.6 1227.7,630.3 1227.9,621.5 1228.1,626.4 1228.2,631.0 1228.4,631.7 1228.6,624.9 1228.7,626.5 1228.9,622.7 1229.1,630.2 1229.2,628.5 1229.4,628.9 1229.6,633.6 1229.7,629.8 1229.9,624.5 1230.1,630.1 1230.2,629.4 1230.4,624.6 1230.6,623.7 1230.7,631.8 1230.9,629.4 1231.1,618.0 1231.2,624.9 1231.4,645.7 1231.6,624.5 1231.7,619.8 1231.9,622.8 1232.0,628.2 1232.2,629.7 1232.4,621.5 1232.5,621.4 1232.7,630.6 1232.9,629.5 1233.0,625.6 1233.2,624.3 1233.3,628.3 1233.5,623.9 1233.7,631.7 1233.8,629.0 1234.0,637.9 1234.2,624.6 1234.3,626.9 1234.5,625.8 1234.6,629.6 1234.8,624.3 1235.0,624.4 1235.1,632.6 1235.3,637.4 1235.4,627.3 1235.6,622.3 1235.8,628.5 1235.9,625.3 1236.1,625.2 1236.2,630.8 1236.4,636.3 1236.6,625.5 1236.7,634.2 1236.9,629.8 1237.0,619.9 1237.2,633.4 1237.4,629.7 1237.5,623.3 1237.7,591.4 1237.8,637.0 1238.0,625.0 1238.2,623.2 1238.3,627.5 1238.5,624.2 1238.6,632.6 1238.8,632.0 1238.9,626.2 1239.1,624.2 1239.3,631.6 1239.4,626.2 1239.6,629.7 1239.7,622.9 1239.9,617.9 1240.0,628.0 1240.2,621.9 1240.4,629.8 1240.5,624.6 1240.7,630.2 1240.8,632.7 1241.0,619.6 1241.1,630.7 1241.3,621.2 1241.5,621.8 1241.6,630.5 1241.8,630.0 1241.9,631.5 1242.1,621.3 1242.2,629.7 1242.4,630.8 1242.5,628.5 1242.7,636.9 1242.9,621.6 1243.0,624.0 1243.2,620.2 1243.3,627.6 1243.5,625.5 1243.6,631.3 1243.8,628.5 1243.9,620.7 1244.1,621.1 1244.2,627.8 1244.4,632.8 1244.5,628.6 1244.7,631.2 1244.9,625.7 1245.0,624.6 1245.2,622.4 1245.3,629.8 1245.5,630.0 1245.6,629.2 1245.8,622.0 1245.9,629.1 1246.1,627.3 1246.2,619.7 1246.4,616.6 1246.5,627.4 1246.7,626.9 1246.8,629.4 1247.0,621.9 1247.1,622.0 1247.3,621.8 1247.4,632.6 1247.6,618.7 1247.7,628.4 1247.9,640.3 1248.0,624.6 1248.2,629.3 1248.3,630.0 1248.5,626.7 1248.6,623.1 1248.8,631.5 1248.9,631.5 1249.1,618.8 1249.2,628.1 1249.4,622.3 1249.5,619.5 1249.7,624.4 1249.8,618.2 1250.0,620.3 1250.1,637.0 1250.3,625.5 1250.4,626.0 1250.6,628.4 1250.7,623.9 1250.9,629.6 1251.0,629.4 1251.2,624.1 1251.3,625.7 1251.5,623.6 1251.6,624.1 1251.8,629.9 1251.9,626.9 1252.1,626.9 1252.2,624.9 1252.4,624.1 1252.5,625.1 1252.7,632.3 1252.8,630.1 1252.9,623.1 1253.1,631.9 1253.2,631.5 1253.4,630.8 1253.5,625.5 1253.7,622.9 1253.8,629.4 1254.0,624.3 1254.1,629.6 1254.3,626.9 1254.4,621.6 1254.6,587.5 1254.7,625.8 1254.8,638.2 1255.0,624.8 1255.1,636.8 1255.3,627.8 1255.4,622.9 1255.6,622.4 1255.7,635.8 1255.9,623.8 1256.0,620.0 1256.1,624.4 1256.3,622.5 1256.4,625.6 1256.6,637.8 1256.7,630.8 1256.9,616.4 1257.0,620.7 1257.2,620.7 1257.3,625.5 1257.4,622.4 1257.6,631.0 1257.7,623.7 1257.9,619.3 1258.0,635.4 1258.2,622.0 1258.3,625.3 1258.4,620.4 1258.6,622.5 1258.7,633.7 1258.9,620.3 1259.0,618.5 1259.2,621.8 1259.3,621.9 1259.4,625.3 1259.6,629.8 1259.7,631.1 1259.9,620.5 1260.0,626.4 1260.2,623.1 1260.3,618.1 1260.4,633.9 1260.6,627.0 1260.7,623.2 1260.9,622.2 1261.0,629.7 1261.1,623.0 1261.3,622.3 1261.4,620.9 1261.6,635.0 1261.7,632.7 1261.8,629.5 1262.0,618.7 1262.1,617.5 1262.3,622.2 1262.4,628.0 1262.5,620.5 1262.7,618.2 1262.8,623.1 1263.0,631.8 1263.1,620.0 1263.2,621.5 1263.4,618.6 1263.5,631.8 1263.7,617.8 1263.8,623.2 1263.9,622.8 1264.1,623.5 1264.2,623.4 1264.3,623.1 1264.5,634.0 1264.6,624.3 1264.8,628.7 1264.9,619.3 1265.0,625.1 1265.2,628.5 1265.3,619.5 1265.5,629.5 1265.6,633.6 1265.7,623.3 1265.9,619.1 1266.0,625.9 1266.1,630.2 1266.3,625.2 1266.4,626.5 1266.6,621.5 1266.7,627.8 1266.8,621.3 1267.0,624.6 1267.1,624.6 1267.2,620.9 1267.4,627.4 1267.5,618.9 1267.6,643.0 1267.8,627.8 1267.9,620.5 1268.0,641.3 1268.2,630.0 1268.3,623.4 1268.5,626.9 1268.6,619.9 1268.7,629.7 1268.9,624.7 1269.0,631.5 1269.1,630.3 1269.3,639.8 1269.4,617.6 1269.5,628.1 1269.7,623.5 1269.8,626.2 1269.9,619.4 1270.1,606.0 1270.2,615.8 1270.3,623.9 1270.5,627.1 1270.6,620.1 1270.7,633.6 1270.9,625.6 1271.0,622.9 1271.1,619.3 1271.3,644.0 1271.4,620.4 1271.5,623.5 1271.7,621.7 1271.8,623.4 1271.9,625.1 1272.1,617.2 1272.2,614.0 1272.3,621.6 1272.5,620.1 1272.6,616.2 1272.7,626.4 1272.9,616.2 1273.0,622.9 1273.1,617.8 1273.3,616.3 1273.4,626.1 1273.5,622.2 1273.7,617.9 1273.8,618.9 1273.9,619.6 1274.1,631.2 1274.2,619.7 1274.3,625.9 1274.5,616.2 1274.6,630.3 1274.7,614.8 1274.9,619.1 1275.0,618.4 1275.1,634.1 1275.2,625.0 1275.4,618.5 1275.5,637.7 1275.6,621.7 1275.8,619.7 1275.9,616.5 1276.0,614.8 1276.2,622.1 1276.3,615.1 1276.4,614.7 1276.6,623.1 1276.7,619.7 1276.8,625.7 1276.9,621.4 1277.1,617.5 1277.2,616.4 1277.3,622.1 1277.5,619.5 1277.6,618.9 1277.7,621.9 1277.8,625.2 1278.0,618.6 1278.1,620.3 1278.2,621.8 1278.4,625.2 1278.5,617.0 1278.6,612.9 1278.8,622.5 1278.9,620.7 1279.0,629.0 1279.1,614.5 1279.3,621.1 1279.4,618.8 1279.5,616.3 1279.6,621.2 1279.8,616.4 1279.9,621.6 1280.0,625.5 1280.2,617.5 1280.3,621.6 1280.4,624.4 1280.5,618.4 1280.7,615.0 1280.8,617.8 1280.9,619.7 1281.0,615.1 1281.2,613.5 1281.3,622.7 1281.4,611.1 1281.6,617.7 1281.7,614.7 1281.8,619.0 1281.9,619.4 1282.1,618.6 1282.2,633.4 1282.3,613.9 1282.4,613.1 1282.6,618.9 1282.7,612.8 1282.8,614.8 1282.9,619.8 1283.1,621.3 1283.2,616.5 1283.3,627.2 1283.4,611.9 1283.6,630.3 1283.7,621.2 1283.8,618.3 1283.9,611.9 1284.1,620.1 1284.2,615.3 1284.3,618.2 1284.4,597.2 1284.6,613.2 1284.7,612.4 1284.8,615.1 1284.9,626.1 1285.1,612.8 1285.2,610.9 1285.3,613.0 1285.4,636.2 1285.6,622.9 1285.7,614.1 1285.8,612.7 1285.9,624.5 1286.1,623.2 1286.2,611.3 1286.3,617.0 1286.4,615.2 1286.6,613.4 1286.7,617.6 1286.8,624.0 1286.9,613.4 1287.1,623.6 1287.2,633.2 1287.3,616.7 1287.4,614.2 1287.5,616.4 1287.7,623.9 1287.8,616.4 1287.9,611.5 1288.0,619.0 1288.2,621.0 1288.3,613.2 1288.4,613.7 1288.5,617.8 1288.6,622.2 1288.8,630.5 1288.9,616.1 1289.0,630.5 1289.1,619.4 1289.3,608.8 1289.4,614.7 1289.5,612.0 1289.6,617.6 1289.7,623.4 1289.9,617.5 1290.0,612.3 1290.1,621.8 1290.2,612.9 1290.3,620.2 1290.5,616.0 1290.6,623.9 1290.7,612.5 1290.8,612.5 1291.0,617.0 1291.1,620.1 1291.2,611.7 1291.3,613.6 1291.4,621.7 1291.6,618.8 1291.7,618.5 1291.8,626.7 1291.9,617.0 1292.0,620.8 1292.2,626.0 1292.3,615.6 1292.4,623.2 1292.5,616.5 1292.6,613.3 1292.8,611.1 1292.9,618.1 1293.0,620.3 1293.1,613.7 1293.2,616.0 1293.4,623.3 1293.5,612.4 1293.6,643.2 1293.7,611.9 1293.8,609.7 1293.9,620.4 1294.1,623.6 1294.2,612.5 1294.3,618.7 1294.4,614.8 1294.5,618.8 1294.7,620.1 1294.8,623.3 1294.9,610.5 1295.0,629.3 1295.1,611.1 1295.3,619.2 1295.4,621.2 1295.5,611.8 1295.6,614.8 1295.7,612.6 1295.8,630.5 1296.0,614.5 1296.1,613.6 1296.2,615.7 1296.3,611.8 1296.4,624.7 1296.5,614.4 1296.7,618.9 1296.8,623.8 1296.9,611.1 1297.0,622.6 1297.1,618.3 1297.2,622.4 1297.4,617.6 1297.5,616.8 1297.6,621.5 1297.7,621.5 1297.8,630.9 1297.9,596.4 1298.1,608.6 1298.2,615.3 1298.3,611.7 1298.4,615.1 1298.5,619.5 1298.6,621.8 1298.8,617.0 1298.9,612.9 1299.0,622.0 1299.1,615.7 1299.2,618.8 1299.3,629.0 1299.5,626.9 1299.6,615.1 1299.7,616.3 1299.8,617.9 1299.9,624.9 1300.0,625.3 1300.1,614.9 1300.3,626.9 1300.4,622.3 1300.5,626.9 1300.6,621.6 1300.7,613.7 1300.8,624.4 1301.0,611.8 1301.1,618.3 1301.2,626.5 1301.3,615.5 1301.4,623.8 1301.5,618.3 1301.6,616.8 1301.8,630.2 1301.9,620.5 1302.0,620.3 1302.1,620.3 1302.2,619.0 1302.3,612.7 1302.4,612.1 1302.5,625.3 1302.7,616.1 1302.8,614.7 1302.9,618.6 1303.0,617.2 1303.1,629.7 1303.2,625.8 1303.3,616.0 1303.5,618.8 1303.6,624.8 1303.7,617.0 1303.8,624.1 1303.9,623.7 1304.0,610.6 1304.1,614.6 1304.2,629.1 1304.4,610.2 1304.5,615.9 1304.6,615.9 1304.7,612.8 1304.8,623.0 1304.9,621.4 1305.0,622.8 1305.1,619.3 1305.3,613.4 1305.4,611.9 1305.5,624.3 1305.6,622.0 1305.7,613.8 1305.8,612.8 1305.9,618.6 1306.0,625.5 1306.2,615.3 1306.3,622.6 1306.4,634.9 1306.5,623.1 1306.6,629.5 1306.7,619.4 1306.8,624.2 1306.9,623.1 1307.0,623.6 1307.2,618.8 1307.3,619.3 1307.4,627.5 1307.5,616.9 1307.6,616.0 1307.7,620.3 1307.8,616.5 1307.9,617.6 1308.0,614.7 1308.2,614.4 1308.3,619.3 1308.4,616.4 1308.5,625.6 1308.6,622.5 1308.7,615.7 1308.8,630.7 1308.9,623.8 1309.0,620.7 1309.1,615.6 1309.3,617.5 1309.4,622.2 1309.5,617.9 1309.6,615.6 1309.7,623.6 1309.8,619.6 1309.9,616.2 1310.0,612.0 1310.1,617.5 1310.2,614.3 1310.3,617.9 1310.5,598.0 1310.6,620.4 1310.7,621.1 1310.8,615.4 1310.9,624.7 1311.0,628.5 1311.1,617.8 1311.2,627.3 1311.3,636.7 1311.4,614.7 1311.5,621.5 1311.7,617.4 1311.8,618.6 1311.9,618.4 1312.0,616.5 1312.1,616.3 1312.2,617.9 1312.3,622.2 1312.4,618.5 1312.5,619.1 1312.6,618.2 1312.7,636.1 1312.8,636.6 1313.0,621.8 1313.1,626.4 1313.2,619.6 1313.3,621.5 1313.4,617.6 1313.5,622.5 1313.6,629.7 1313.7,619.4 1313.8,613.3 1313.9,622.9 1314.0,616.2 1314.1,613.1 1314.2,622.0 1314.3,619.4 1314.5,620.3 1314.6,621.0 1314.7,616.7 1314.8,611.9 1314.9,621.0 1315.0,625.7 1315.1,613.6 1315.2,618.7 1315.3,632.8 1315.4,612.6 1315.5,612.8 1315.6,632.3 1315.7,616.5 1315.8,618.8 1315.9,625.4 1316.1,621.0 1316.2,617.8 1316.3,626.1 1316.4,629.1 1316.5,624.7 1316.6,625.1 1316.7,615.3 1316.8,616.2 1316.9,614.4 1317.0,615.5 1317.1,615.2 1317.2,627.6 1317.3,613.5 1317.4,618.6 1317.5,629.1 1317.6,615.7 1317.7,638.4 1317.8,620.6 1318.0,625.2 1318.1,614.0 1318.2,620.3 1318.3,628.7 1318.4,614.9 1318.5,620.7 1318.6,625.8 1318.7,619.4 1318.8,617.5 1318.9,617.1 1319.0,616.0 1319.1,623.3 1319.2,616.0 1319.3,614.2 1319.4,612.0 1319.5,618.8 1319.6,629.0 1319.7,627.5 1319.8,612.5 1319.9,613.3 1320.0,616.7 1320.1,626.4 1320.2,616.4 1320.4,616.6 1320.5,614.9 1320.6,618.2 1320.7,614.4 1320.8,610.0 1320.9,614.1 1321.0,615.0 1321.1,620.2 1321.2,613.3 1321.3,614.0 1321.4,613.2 1321.5,625.6 1321.6,621.7 1321.7,614.7 1321.8,617.4 1321.9,620.6 1322.0,614.1 1322.1,614.1 1322.2,601.0 1322.3,609.6 1322.4,619.8 1322.5,618.7 1322.6,618.1 1322.7,616.4 1322.8,626.8 1322.9,630.8 1323.0,618.3 1323.1,623.7 1323.2,614.3 1323.3,615.8 1323.4,616.2 1323.5,611.9 1323.6,620.6 1323.7,624.0 1323.8,625.3 1323.9,618.8 1324.1,623.7 1324.2,612.7 1324.3,620.5 1324.4,621.5 1324.5,629.0 1324.6,620.4 1324.7,611.3 1324.8,623.1 1324.9,624.6 1325.0,617.9 1325.1,619.7 1325.2,618.9 1325.3,614.1 1325.4,618.7 1325.5,610.2 1325.6,618.4 1325.7,625.5 1325.8,618.9 1325.9,617.6 1326.0,621.0 1326.1,614.2 1326.2,618.0 1326.3,649.4 1326.4,614.6 1326.5,620.9 1326.6,616.2 1326.7,625.9 1326.8,618.1 1326.9,615.0 1327.0,632.5 1327.1,621.1 1327.2,616.4 1327.3,621.9 1327.4,619.5 1327.5,620.8 1327.6,623.3 1327.7,622.9 1327.8,620.5 1327.9,623.4 1328.0,617.3 1328.1,615.0 1328.2,618.0 1328.3,632.3 1328.4,619.0 1328.5,619.3 1328.6,618.6 1328.7,628.0 1328.8,621.2 1328.9,619.1 1329.0,613.2 1329.1,621.4 1329.2,615.8 1329.3,622.0 1329.4,618.5 1329.5,612.2 1329.6,613.4 1329.7,615.8 1329.8,621.1 1329.9,617.3 1330.0,625.4 1330.1,633.9 1330.2,626.4 1330.3,621.2 1330.4,620.1 1330.5,631.7 1330.6,615.5 1330.7,628.0 1330.8,612.6 1330.9,648.5 1330.9,624.4 1331.0,614.5 1331.1,612.9 1331.2,634.0 1331.3,614.3 1331.4,614.4 1331.5,617.7 1331.6,615.6 1331.7,617.1 1331.8,616.1 1331.9,626.9 1332.0,620.2 1332.1,623.1 1332.2,615.2 1332.3,623.6 1332.4,634.3 1332.5,612.3 1332.6,618.4 1332.7,615.9 1332.8,611.1 1332.9,619.5 1333.0,610.5 1333.1,615.1 1333.2,621.8 1333.3,593.3 1333.4,621.3 1333.5,613.7 1333.6,618.9 1333.7,614.5 1333.8,613.7 1333.9,612.4 1334.0,617.4 1334.1,628.2 1334.2,614.7 1334.3,610.8 1334.4,616.0 1334.5,618.9 1334.5,621.7 1334.6,635.9 1334.7,613.4 1334.8,619.7 1334.9,622.1 1335.0,620.0 1335.1,611.1 1335.2,612.3 1335.3,621.4 1335.4,614.7 1335.5,618.3 1335.6,630.2 1335.7,622.7 1335.8,611.7 1335.9,616.8 1336.0,618.8 1336.1,623.7 1336.2,614.0 1336.3,613.5 1336.4,623.8 1336.5,617.6 1336.6,615.2 1336.7,621.9 1336.8,616.1 1336.8,620.0 1336.9,616.0 1337.0,615.6 1337.1,613.7 1337.2,613.3 1337.3,610.5 1337.4,622.5 1337.5,632.0 1337.6,621.1 1337.7,630.9 1337.8,618.8 1337.9,616.7 1338.0,612.9 1338.1,617.9 1338.2,616.7 1338.3,627.4 1338.4,629.1 1338.5,617.3 1338.6,620.6 1338.7,620.9 1338.7,620.6 1338.8,627.9 1338.9,612.5 1339.0,616.5 1339.1,617.2 1339.2,634.0 1339.3,612.8 1339.4,616.8 1339.5,642.6 1339.6,615.6 1339.7,618.4 1339.8,616.0 1339.9,612.3 1340.0,622.7 1340.1,613.5 1340.2,620.2 1340.2,617.0 1340.3,623.4 1340.4,619.0 1340.5,614.4 1340.6,619.5 1340.7,613.0 1340.8,617.9 1340.9,616.6 1341.0,614.5 1341.1,616.9 1341.2,613.2 1341.3,616.1 1341.4,626.0 1341.5,613.5 1341.6,614.4 1341.6,623.4 1341.7,612.2 1341.8,617.0 1341.9,607.9 1342.0,620.4 1342.1,622.3 1342.2,619.7 1342.3,612.8 1342.4,617.6 1342.5,623.2 1342.6,610.5 1342.7,624.2 1342.8,624.2 1342.9,616.6 1342.9,620.1 1343.0,623.5 1343.1,616.3 1343.2,616.6 1343.3,618.1 1343.4,621.0 1343.5,616.7 1343.6,624.4 1343.7,616.5 1343.8,590.2 1343.9,615.8 1344.0,628.6 1344.1,623.8 1344.1,620.4 1344.2,615.0 1344.3,625.5 1344.4,610.6 1344.5,627.9 1344.6,616.6 1344.7,611.9 1344.8,615.8 1344.9,623.4 1345.0,617.4 1345.1,620.9 1345.1,617.8 1345.2,616.9 1345.3,615.2 1345.4,613.7 1345.5,614.7 1345.6,615.6 1345.7,624.2 1345.8,624.1 1345.9,617.3 1346.0,611.8 1346.1,618.0 1346.2,621.8 1346.2,615.2 1346.3,618.3 1346.4,620.1 1346.5,619.3 1346.6,615.4 1346.7,620.4 1346.8,621.8 1346.9,637.2 1347.0,623.5 1347.1,613.7 1347.1,618.9 1347.2,624.7 1347.3,624.4 1347.4,614.0 1347.5,616.8 1347.6,621.2 1347.7,621.1 1347.8,621.4 1347.9,618.9 1348.0,619.9 1348.0,616.5 1348.1,621.9 1348.2,615.4 1348.3,614.8 1348.4,616.8 1348.5,616.3 1348.6,616.9 1348.7,611.3 1348.8,637.2 1348.9,625.6 1348.9,624.4 1349.0,615.3 1349.1,623.3 1349.2,612.1 1349.3,620.3 1349.4,614.8 1349.5,619.5 1349.6,612.8 1349.7,620.2 1349.7,635.7 1349.8,614.4 1349.9,618.1 1350.0,615.4 1350.1,617.2 1350.2,628.5 1350.3,614.0 1350.4,623.3 1350.5,620.1 1350.6,629.3 1350.6,621.0 1350.7,615.0 1350.8,629.5 1350.9,615.0 1351.0,614.2 1351.1,624.7 1351.2,628.3 1351.3,621.3 1351.3,613.2 1351.4,617.9 1351.5,614.4 1351.6,613.8 1351.7,615.1 1351.8,609.1 1351.9,626.5 1352.0,616.7 1352.1,616.0 1352.1,616.5 1352.2,619.9 1352.3,620.1 1352.4,620.3 1352.5,621.9 1352.6,624.5 1352.7,632.7 1352.8,623.6 1352.8,634.4 1352.9,618.3 1353.0,613.7 1353.1,618.5 1353.2,623.5 1353.3,614.4 1353.4,617.1 1353.5,616.6 1353.5,615.8 1353.6,621.5 1353.7,599.0 1353.8,617.7 1353.9,617.4 1354.0,629.9 1354.1,622.7 1354.2,615.8 1354.2,625.1 1354.3,620.6 1354.4,618.5 1354.5,620.4 1354.6,618.2 1354.7,612.1 1354.8,622.5 1354.9,619.9 1354.9,623.1 1355.0,622.5 1355.1,616.9 1355.2,625.1 1355.3,610.3 1355.4,620.5 1355.5,618.8 1355.5,625.0 1355.6,619.8 1355.7,618.0 1355.8,632.9 1355.9,627.8 1356.0,617.2 1356.1,625.5 1356.2,625.8 1356.2,650.9 1356.3,612.1 1356.4,617.6 1356.5,620.7 1356.6,620.0 1356.7,619.6 1356.8,630.4 1356.8,612.9 1356.9,614.1 1357.0,616.7 1357.1,618.7 1357.2,629.0 1357.3,621.0 1357.4,626.5 1357.4,613.7 1357.5,624.7 1357.6,618.8 1357.7,624.0 1357.8,626.3 1357.9,621.4 1358.0,617.8 1358.0,621.1 1358.1,617.4 1358.2,621.0 1358.3,620.3 1358.4,627.2 1358.5,617.9 1358.6,624.9 1358.6,615.7 1358.7,629.6 1358.8,625.2 1358.9,620.1 1359.0,627.9 1359.1,627.6 1359.1,620.1 1359.2,623.8 1359.3,614.5 1359.4,622.2 1359.5,617.1 1359.6,618.2 1359.7,618.6 1359.7,612.8 1359.8,632.1 1359.9,614.4 1360.0,614.6 1360.1,620.0 1360.2,614.1 1360.2,621.3 1360.3,621.6 1360.4,619.6 1360.5,631.7 1360.6,618.7 1360.7,615.4 1360.8,619.4 1360.8,625.4 1360.9,617.9 1361.0,621.6 1361.1,625.7 1361.2,621.5 1361.3,619.6 1361.3,622.7 1361.4,616.4 1361.5,617.1 1361.6,627.3 1361.7,623.6 1361.8,621.6 1361.8,631.3 1361.9,623.4 1362.0,618.5 1362.1,615.7 1362.2,618.5 1362.3,612.4 1362.3,624.6 1362.4,615.0 1362.5,638.8 1362.6,636.3 1362.7,613.9 1362.8,623.0 1362.8,619.5 1362.9,623.6 1363.0,617.8 1363.1,623.0 1363.2,592.5 1363.3,612.0 1363.3,625.3 1363.4,623.5 1363.5,617.7 1363.6,626.3 1363.7,617.4 1363.8,610.9 1363.8,620.2 1363.9,612.7 1364.0,618.2 1364.1,616.1 1364.2,627.4 1364.3,615.1 1364.3,616.8 1364.4,616.5 1364.5,626.1 1364.6,618.4 1364.7,617.2 1364.8,618.6 1364.8,613.0 1364.9,619.8 1365.0,618.0 1365.1,620.8 1365.2,626.1 1365.2,621.2 1365.3,616.9 1365.4,623.7 1365.5,622.9 1365.6,614.3 1365.7,621.8 1365.7,611.8 1365.8,614.2 1365.9,619.0 1366.0,616.9 1366.1,614.9 1366.2,630.5 1366.2,621.0 1366.3,616.6 1366.4,617.7 1366.5,609.8 1366.6,617.0 1366.6,619.0 1366.7,621.7 1366.8,622.4 1366.9,618.1 1367.0,618.0 1367.1,619.0 1367.1,639.6 1367.2,624.5 1367.3,612.4 1367.4,623.0 1367.5,624.2 1367.5,625.3 1367.6,626.7 1367.7,614.8 1367.8,620.6 1367.9,627.5 1367.9,618.0 1368.0,613.5 1368.1,609.1 1368.2,618.3 1368.3,617.7 1368.4,618.0 1368.4,616.5 1368.5,618.1 1368.6,621.5 1368.7,632.4 1368.8,614.3 1368.8,611.3 1368.9,633.2 1369.0,634.7 1369.1,610.4 1369.2,620.8 1369.2,629.7 1369.3,623.9 1369.4,621.5 1369.5,612.9 1369.6,621.9 1369.6,616.9 1369.7,615.5 1369.8,627.5 1369.9,622.3 1370.0,623.6 1370.0,638.8 1370.1,622.2 1370.2,617.3 1370.3,620.2 1370.4,625.6 1370.4,615.2 1370.5,625.7 1370.6,628.8 1370.7,621.5 1370.8,620.5 1370.8,622.1 1370.9,620.8 1371.0,612.5 1371.1,621.6 1371.2,620.0 1371.2,614.9 1371.3,614.9 1371.4,620.6 1371.5,627.5 1371.6,621.0 1371.6,620.9 1371.7,620.6 1371.8,626.8 1371.9,627.5 1372.0,616.7 1372.0,620.0 1372.1,618.5 1372.2,594.0 1372.3,618.3 1372.4,621.6 1372.4,617.1 1372.5,612.8 1372.6,619.2 1372.7,620.3 1372.8,610.7 1372.8,616.6 1372.9,630.9 1373.0,616.8 1373.1,614.0 1373.2,623.5 1373.2,615.0 1373.3,614.2 1373.4,613.9 1373.5,620.2 1373.5,626.1 1373.6,619.1 1373.7,623.5 1373.8,624.3 1373.9,620.0 1373.9,614.8 1374.0,615.0 1374.1,625.8 1374.2,610.6 1374.3,631.8 1374.3,626.3 1374.4,621.3 1374.5,626.7 1374.6,618.2 1374.6,633.8 1374.7,613.7 1374.8,616.1 1374.9,634.1 1375.0,608.9 1375.0,613.3 1375.1,615.3 1375.2,618.9 1375.3,614.6 1375.4,646.7 1375.4,621.4 1375.5,617.2 1375.6,608.3 1375.7,612.4 1375.7,616.7 1375.8,632.0 1375.9,616.4 1376.0,631.8 1376.1,613.1 1376.1,614.8 1376.2,621.4 1376.3,629.7 1376.4,638.4 1376.4,616.6 1376.5,619.6 1376.6,618.2 1376.7,620.9 1376.8,627.1 1376.8,622.0 1376.9,620.0 1377.0,609.5 1377.1,613.0 1377.1,614.5 1377.2,622.4 1377.3,614.4 1377.4,618.9 1377.5,611.9 1377.5,613.5 1377.6,620.0 1377.7,614.5 1377.8,616.7 1377.8,621.2 1377.9,620.9 1378.0,615.4 1378.1,622.2 1378.1,613.4 1378.2,612.8 1378.3,625.7 1378.4,613.1 1378.5,607.3 1378.5,627.2 1378.6,620.1 1378.7,613.8 1378.8,613.9 1378.8,609.6 1378.9,624.4 1379.0,622.5 1379.1,608.8 1379.1,612.7 1379.2,618.0 1379.3,618.1 1379.4,616.3 1379.5,609.1 1379.5,610.1 1379.6,623.3 1379.7,610.9 1379.8,617.8 1379.8,608.8 1379.9,611.8 1380.0,613.3 1380.1,614.8 1380.1,614.7 1380.2,609.3 1380.3,614.2 1380.4,617.7 1380.4,617.2 1380.5,619.6 1380.6,636.7 1380.7,611.6 1380.7,621.4 1380.8,589.4 1380.9,610.7 1381.0,610.8 1381.1,616.9 1381.1,610.3 1381.2,613.1 1381.3,614.5 1381.4,614.8 1381.4,615.6 1381.5,631.4 1381.6,640.6 1381.7,618.7 1381.7,627.4 1381.8,620.6 1381.9,614.8 1382.0,617.9 1382.0,616.1 1382.1,607.8 1382.2,617.7 1382.3,612.0 1382.3,621.4 1382.4,615.2 1382.5,645.9 1382.6,618.7 1382.6,610.9 1382.7,608.5 1382.8,613.8 1382.9,623.0 1382.9,610.2 1383.0,611.7 1383.1,617.5 1383.2,613.0 1383.2,618.2 1383.3,608.1 1383.4,619.6 1383.5,622.4 1383.5,614.3 1383.6,616.9 1383.7,611.1 1383.8,612.4 1383.8,610.1 1383.9,611.7 1384.0,624.7 1384.1,615.4 1384.1,616.4 1384.2,628.4 1384.3,616.1 1384.4,614.5 1384.4,620.9 1384.5,608.8 1384.6,608.3 1384.7,616.2 1384.7,620.4 1384.8,612.3 1384.9,624.0 1385.0,611.5 1385.0,616.3 1385.1,613.8 1385.2,612.1 1385.3,612.4 1385.3,618.0 1385.4,611.7 1385.5,628.2 1385.5,608.7 1385.6,615.1 1385.7,610.9 1385.8,620.4 1385.8,610.3 1385.9,607.5 1386.0,604.6 1386.1,612.2 1386.1,620.3 1386.2,623.3 1386.3,606.6 1386.4,614.7 1386.4,613.1 1386.5,611.7 1386.6,633.1 1386.7,604.7 1386.7,606.5 1386.8,610.4 1386.9,625.8 1387.0,618.5 1387.0,617.6 1387.1,612.8 1387.2,607.9 1387.2,611.1 1387.3,621.7 1387.4,615.9 1387.5,617.2 1387.5,609.2 1387.6,610.7 1387.7,618.0 1387.8,615.8 1387.8,603.8 1387.9,619.6 1388.0,602.7 1388.1,623.3 1388.1,614.5 1388.2,609.0 1388.3,617.6 1388.3,617.2 1388.4,617.9 1388.5,611.2" fill="none" stroke="#00f400" stroke-width="0.8" stroke-linejoin="round"/></svg>
<span class="t" style="left:467.09px;top:497.17px;font-family:'Liberation Sans',sans-serif;font-weight:normal;font-size:10.20px;color:#d2d2d2;transform:scaleX(0.9700);transform-origin:0 0;-webkit-text-stroke:0.2px #d2d2d2;">20dB</span>
<span class="t" style="left:472.59px;top:520.92px;font-family:'Liberation Sans',sans-serif;font-weight:normal;font-size:10.20px;color:#d2d2d2;transform:scaleX(0.9700);transform-origin:0 0;-webkit-text-stroke:0.2px #d2d2d2;">0dB</span>
<span class="t" style="left:463.80px;top:544.67px;font-family:'Liberation Sans',sans-serif;font-weight:normal;font-size:10.20px;color:#d2d2d2;transform:scaleX(0.9700);transform-origin:0 0;-webkit-text-stroke:0.2px #d2d2d2;">-20dB</span>
<span class="t" style="left:463.80px;top:568.42px;font-family:'Liberation Sans',sans-serif;font-weight:normal;font-size:10.20px;color:#d2d2d2;transform:scaleX(0.9700);transform-origin:0 0;-webkit-text-stroke:0.2px #d2d2d2;">-40dB</span>
<span class="t" style="left:463.80px;top:592.17px;font-family:'Liberation Sans',sans-serif;font-weight:normal;font-size:10.20px;color:#d2d2d2;transform:scaleX(0.9700);transform-origin:0 0;-webkit-text-stroke:0.2px #d2d2d2;">-60dB</span>
<span class="t" style="left:463.80px;top:615.92px;font-family:'Liberation Sans',sans-serif;font-weight:normal;font-size:10.20px;color:#d2d2d2;transform:scaleX(0.9700);transform-origin:0 0;-webkit-text-stroke:0.2px #d2d2d2;">-80dB</span>
<span class="t" style="left:458.29px;top:639.67px;font-family:'Liberation Sans',sans-serif;font-weight:normal;font-size:10.20px;color:#d2d2d2;transform:scaleX(0.9700);transform-origin:0 0;-webkit-text-stroke:0.2px #d2d2d2;">-100dB</span>
<span class="t" style="left:458.29px;top:663.42px;font-family:'Liberation Sans',sans-serif;font-weight:normal;font-size:10.20px;color:#d2d2d2;transform:scaleX(0.9700);transform-origin:0 0;-webkit-text-stroke:0.2px #d2d2d2;">-120dB</span>
<span class="t" style="left:458.29px;top:687.17px;font-family:'Liberation Sans',sans-serif;font-weight:normal;font-size:10.20px;color:#d2d2d2;transform:scaleX(0.9700);transform-origin:0 0;-webkit-text-stroke:0.2px #d2d2d2;">-140dB</span>
<span class="t" style="left:458.29px;top:710.92px;font-family:'Liberation Sans',sans-serif;font-weight:normal;font-size:10.20px;color:#d2d2d2;transform:scaleX(0.9700);transform-origin:0 0;-webkit-text-stroke:0.2px #d2d2d2;">-160dB</span>
<span class="t" style="left:458.29px;top:734.67px;font-family:'Liberation Sans',sans-serif;font-weight:normal;font-size:10.20px;color:#d2d2d2;transform:scaleX(0.9700);transform-origin:0 0;-webkit-text-stroke:0.2px #d2d2d2;">-180dB</span>
<span class="t" style="left:458.29px;top:758.42px;font-family:'Liberation Sans',sans-serif;font-weight:normal;font-size:10.20px;color:#d2d2d2;transform:scaleX(0.9700);transform-origin:0 0;-webkit-text-stroke:0.2px #d2d2d2;">-200dB</span>
<span class="t" style="left:458.29px;top:782.17px;font-family:'Liberation Sans',sans-serif;font-weight:normal;font-size:10.20px;color:#d2d2d2;transform:scaleX(0.9700);transform-origin:0 0;-webkit-text-stroke:0.2px #d2d2d2;">-220dB</span>
<span class="t" style="left:760.80px;top:793.57px;font-family:'Liberation Sans',sans-serif;font-weight:normal;font-size:10.20px;color:#d2d2d2;transform:scaleX(0.8980);transform-origin:0 0;-webkit-text-stroke:0.2px #d2d2d2;">1KHz</span>
<span class="t" style="left:1204.40px;top:793.57px;font-family:'Liberation Sans',sans-serif;font-weight:normal;font-size:10.20px;color:#d2d2d2;transform:scaleX(0.9146);transform-origin:0 0;-webkit-text-stroke:0.2px #d2d2d2;">10KHz</span>
<span class="t" style="left:928.00px;top:489.87px;font-family:'Liberation Sans',sans-serif;font-weight:bold;font-size:10.20px;color:#10e010;transform:scaleX(0.9438);transform-origin:0 0;">V(out)</span>
<span class="t" style="left:526.80px;top:533.45px;font-family:'DejaVu Sans','Liberation Sans',sans-serif;font-weight:bold;font-size:25.00px;color:#ff0000;transform:scaleX(0.9724);transform-origin:0 0;">R13 = 2K</span>
<div class="a" style="left:3px;top:832.8px;width:1434px;height:18.2px;background:#ebebeb;box-shadow:inset 0 0.8px 0 #f8f8f8;"></div>
<div class="a" style="left:752px;top:833.6px;width:117.6px;height:16.8px;background:#dcdcdc;border-radius:2px;box-shadow:inset 0 0 0 0.8px #b4b4b4;"></div>
<svg style="left:3px;top:832px" width="1434" height="19" viewBox="3 832 1434 19" ><g transform="translate(12.6,841.6) scale(0.7)"><path d="M-8 -0.8 C-7 -3.4 -3 -4 -0.5 -3.8 C3 -3.8 7 -3.4 7.9 -1.6 C8.8 0.4 8.4 4.4 6.2 6.8 C4.6 8.8 2.4 9.8 0.2 9.8 C-2 9.8 -4.4 9 -5.4 7.6 C-6.2 6.4 -6.4 5.4 -5.6 4.9 C-4.8 4.4 -3.6 4.8 -2.8 5.6 C-1.6 6.8 0.4 7 1.8 6.2 C3 5.4 3 4 1.6 3.5 C0 3 -2 3.4 -4 3.2 C-6.6 3 -8.6 1.6 -8 -0.8 Z" fill="#3c3c3c"/><ellipse cx="5.6" cy="-7.9" rx="3.7" ry="2.3" transform="rotate(-28 5.6 -7.9)" fill="#3c3c3c"/><ellipse cx="0.3" cy="-7.8" rx="1.6" ry="2.4" transform="rotate(12 0.3 -7.8)" fill="#3c3c3c"/><ellipse cx="-3.6" cy="-6.5" rx="1.4" ry="2.1" transform="rotate(-4 -3.6 -6.5)" fill="#3c3c3c"/><ellipse cx="-6.9" cy="-4.4" rx="1.3" ry="1.8" transform="rotate(-20 -6.9 -4.4)" fill="#3c3c3c"/><path d="M7.4 -10 Q9.6 -10.4 10 -8.2" stroke="#3c3c3c" stroke-width="0.8" fill="none"/></g><path d="M25.4 833 V851" stroke="#c0c0c0" stroke-width="0.8"/><g transform="translate(36.6,841.8) scale(0.714)"><path d="M-10 8 V-7 Q-10 -9 -8 -9 H-3 L-1 -6.6 H8.4 Q10 -6.6 10 -5 V8 Q10 9.4 8.6 9.4 H-8.6 Q-10 9.4 -10 8 Z" fill="#5e8fd0"/><path d="M-10 8 V-3.4 H10 V8 Q10 9.4 8.6 9.4 H-8.6 Q-10 9.4 -10 8 Z" fill="#7aa8e2"/><rect x="-6" y="-1" width="12" height="7.6" fill="none" stroke="#2c5aa0" stroke-width="1.2" stroke-dasharray="2.4 2.2"/><rect x="-2" y="1" width="4" height="3.6" fill="none" stroke="#2c5aa0" stroke-width="1"/></g><g transform="translate(53.6,841.8) scale(0.714)"><rect x="-10.4" y="-8.8" width="20.8" height="17.8" rx="2" fill="#5a5e5c" stroke="#222426" stroke-width="1.1"/><rect x="-8.2" y="-6.6" width="16.4" height="11.8" fill="#1e2224"/><path d="M-8 -4.4 h16 M-8 -2.2 h16 M-8 0 h16 M-8 2.2 h16 M-8 4.4 h16" stroke="#3c4042" stroke-width="0.6"/><path d="M-6.2 -3.2 L-3 -1 L-6.2 1.2 M-2 2 H2.2" stroke="#fff" stroke-width="1.3" fill="none"/><path d="M-9.4 6.6 H9.4" stroke="#8a8e8c" stroke-width="0.8"/><rect x="-8.4" y="6.8" width="3" height="1.2" fill="#6ad020"/></g><g transform="translate(72,842) scale(0.7)"><path d="M-8.6 10 V-6 L-6 -9.4 H6 L8.6 -6 V10 Z" fill="#e4e4e2" stroke="#8a8c88" stroke-width="1"/><rect x="-6.4" y="-5.4" width="12.8" height="6.4" fill="#d0d0ce" stroke="#8a8c88" stroke-width="0.9"/><rect x="-6.4" y="2.4" width="12.8" height="6.4" fill="#d0d0ce" stroke="#8a8c88" stroke-width="0.9"/><rect x="-2.6" y="-3.4" width="5.2" height="2.2" fill="#8a8c88"/><rect x="-2.6" y="4.4" width="5.2" height="2.2" fill="#8a8c88"/></g><g transform="translate(90,841.8) scale(0.714)"><rect x="-8.8" y="-10.4" width="17.6" height="20.8" rx="1.6" fill="#626460" stroke="#3a3c38" stroke-width="1"/><rect x="-6.6" y="-8.2" width="13.2" height="4.6" fill="#9be05a" stroke="#4a8a1a" stroke-width="0.7"/><rect x="-6.6" y="-1.8" width="2.2" height="1.8" fill="#a8aaa6"/><rect x="-6.6" y="1.2" width="2.2" height="1.8" fill="#a8aaa6"/><rect x="-6.6" y="4.2" width="2.2" height="1.8" fill="#a8aaa6"/><rect x="-6.6" y="7.2" width="2.2" height="1.8" fill="#a8aaa6"/><rect x="-3" y="-1.8" width="2.2" height="1.8" fill="#a8aaa6"/><rect x="-3" y="1.2" width="2.2" height="1.8" fill="#a8aaa6"/><rect x="-3" y="4.2" width="2.2" height="1.8" fill="#a8aaa6"/><rect x="-3" y="7.2" width="2.2" height="1.8" fill="#a8aaa6"/><rect x="0.6" y="-1.8" width="2.2" height="1.8" fill="#a8aaa6"/><rect x="0.6" y="1.2" width="2.2" height="1.8" fill="#a8aaa6"/><rect x="0.6" y="4.2" width="2.2" height="1.8" fill="#a8aaa6"/><rect x="0.6" y="7.2" width="2.2" height="1.8" fill="#a8aaa6"/><rect x="4.2" y="-1.8" width="2.2" height="1.8" fill="#a8aaa6"/><rect x="4.2" y="1.2" width="2.2" height="1.8" fill="#a8aaa6"/><rect x="4.2" y="4.2" width="2.2" height="1.8" fill="#a8aaa6"/><rect x="4.2" y="7.2" width="2.2" height="1.8" fill="#a8aaa6"/></g><g transform="translate(107.6,841.8) scale(0.728)"><rect x="-9.2" y="-9.2" width="18.4" height="18.4" fill="#fff" stroke="#0a6a0a" stroke-width="1.5"/><path d="M-6 -5.4 H-2 L0.4 -2 L2.8 -5.4 H6.4 L2.2 0 L6.8 5.8 H2.6 L0.2 2.4 L-2.6 5.8 H-6.4 L-1.8 -0.2 Z" fill="#0a7a0a"/><path d="M-7 3 L7.4 -3.4" stroke="#fff" stroke-width="0.7"/></g><g transform="translate(125.6,841.8) scale(0.728)"><rect x="-9.2" y="-9.2" width="18.4" height="18.4" fill="#fff" stroke="#0a0a8a" stroke-width="1.5"/><path d="M-7 -5 H-3.6 L-4 1.6 L-0.6 -5 H2.2 L2 1.6 L5 -5 H8 L2.8 5.4 H-0.4 L-0.2 -0.6 L-3.4 5.4 H-6.6 Z" fill="#0a0a8a"/></g><defs><radialGradient id="mg1436841" cx="0.42" cy="0.36" r="0.7"><stop offset="0" stop-color="#f4f6fb"/><stop offset="0.6" stop-color="#ccd6ea"/><stop offset="1" stop-color="#aebad6"/></radialGradient></defs><circle cx="143.6" cy="841.6" r="8.6" fill="url(#mg1436841)"/><circle cx="169" cy="841.6" r="6" fill="#b4b4b4"/><path d="M165.6 839.6 Q169 845.6 172.4 839.6 L170.8 843.6 L169 845.8 L167.2 843.6 Z" fill="#f2f2f2"/><defs><radialGradient id="mg2880841" cx="0.42" cy="0.36" r="0.7"><stop offset="0" stop-color="#f4f6fb"/><stop offset="0.6" stop-color="#ccd6ea"/><stop offset="1" stop-color="#aebad6"/></radialGradient></defs><circle cx="288" cy="841.6" r="6.2" fill="url(#mg2880841)"/><g transform="translate(406,841.6) scale(0.8)"><path d="M-6 -2 L-1 -6.4 L6.4 -3 L5 4.4 L-2 6.8 L-6.6 3 Z" fill="#b03020"/><path d="M-3 -1 L1 -4 L4 -1 L2 3 L-2 3.6 Z" fill="#e8b090"/><path d="M-6 -2 L-2 6.8" stroke="#701810" stroke-width="1"/></g><g transform="translate(524,841.6) scale(0.76)"><path d="M-8 6.4 V-5.6 Q-8 -7 -6.6 -7 H-2.4 L-0.8 -5 H6.8 Q8 -5 8 -3.8 V6.4 Q8 7.4 7 7.4 H-7 Q-8 7.4 -8 6.4 Z" fill="#5e8fd0"/><path d="M-8 6.4 V-2.4 H8 V6.4 Q8 7.4 7 7.4 H-7 Q-8 7.4 -8 6.4 Z" fill="#86b0e6"/></g><g transform="translate(643,841.6) scale(0.8)"><path d="M-6 -2 L-1 -6.4 L6.4 -3 L5 4.4 L-2 6.8 L-6.6 3 Z" fill="#b03020"/><path d="M-3 -1 L1 -4 L4 -1 L2 3 L-2 3.6 Z" fill="#e8b090"/><path d="M-6 -2 L-2 6.8" stroke="#701810" stroke-width="1"/></g><g transform="translate(757,836.4)"><path d="M0.4 0.6 L10 0.4 L1 10.6 Z" fill="#f4f4f4" stroke="#333" stroke-width="0.8"/><path d="M3 5.6 L5 1.6 L9.4 1 L7.6 4.6" fill="none" stroke="#801010" stroke-width="1"/><path d="M3.6 2 L7 5" stroke="#222" stroke-width="0.8"/></g><rect x="874.4" y="836.2" width="11" height="10.6" rx="1" fill="#4a4e50" stroke="#26282a" stroke-width="0.7"/><rect x="876" y="837.8" width="7.8" height="6.4" fill="#8a8e90"/><path d="M877 839.6 l1.8 1.4 l-1.8 1.4" stroke="#fff" stroke-width="0.7" fill="none"/><g transform="translate(993,835.6)"><rect x="0.6" y="1.4" width="9.6" height="10.6" fill="#f4f0d8" stroke="#a8a48c" stroke-width="0.7"/><path d="M2.4 4.4 h6 M2.4 6.4 h6 M2.4 8.4 h4" stroke="#b8b49c" stroke-width="0.6"/><path d="M6 8.6 L11.6 2 L13 3.2 L7.4 9.8 L5.6 10.4 Z" fill="#e8a020" stroke="#a06010" stroke-width="0.5"/></g><g transform="translate(1108,834.6)"><rect x="0.5" y="0.5" width="17.4" height="13.6" rx="1.4" fill="#5a8ad0" stroke="#3a62a8" stroke-width="0.9"/><rect x="3" y="1" width="12.4" height="6" fill="#f2f2f2"/><rect x="3" y="1" width="12.4" height="1.4" fill="#e8a040"/><rect x="5" y="9" width="8.4" height="5" fill="#c8ccd4"/><rect x="7.4" y="10.4" width="2" height="2.4" fill="#444"/></g><g transform="translate(1134,833) scale(1.0875)"><rect x="0" y="0" width="16" height="16" rx="0" fill="#000"/><path d="M1.6 2.6 L5 13 L8.6 2.6" fill="none" stroke="#10c020" stroke-width="1.9"/><path d="M9.8 7 V4.6 Q9.8 3 11.6 3 Q13.4 3 13.4 4.6 V7" fill="none" stroke="#2040ff" stroke-width="1.5"/><path d="M14 9.2 H12 Q10 9.2 10 11 Q10 12.8 12 12.8 H14" fill="none" stroke="#ff2020" stroke-width="1.5"/></g><g transform="translate(1161,841.6) scale(0.74)"><ellipse cx="0" cy="0" rx="8.6" ry="11.4" fill="#2f6fc4"/><ellipse cx="0" cy="-3" rx="7" ry="7.6" fill="#4a88d8" opacity="0.6"/><path d="M-4 -4.4 L4 3.8 L0 7.6 V-7.6 L4 -3.8 L-4 4.4" fill="none" stroke="#fff" stroke-width="1.7"/></g><path d="M1180 834.4 Q1187.6 843 1187 846 Q1186 850.4 1180 850.4 Q1174 850.4 1173 846 Q1172.4 843 1180 834.4 Z" fill="#3a72b8"/><ellipse cx="1179.4" cy="845.4" rx="3.6" ry="3.2" fill="#8ab6e6" opacity="0.8"/><rect x="1190" y="833.2" width="17.6" height="17.6" fill="#f4f0f0"/><rect x="1190" y="833.20" width="17.6" height="1.35" fill="#c8323c"/><rect x="1190" y="835.91" width="17.6" height="1.35" fill="#c8323c"/><rect x="1190" y="838.62" width="17.6" height="1.35" fill="#c8323c"/><rect x="1190" y="841.32" width="17.6" height="1.35" fill="#c8323c"/><rect x="1190" y="844.03" width="17.6" height="1.35" fill="#c8323c"/><rect x="1190" y="846.74" width="17.6" height="1.35" fill="#c8323c"/><rect x="1190" y="849.45" width="17.6" height="1.35" fill="#c8323c"/><rect x="1190" y="833.2" width="9.68" height="9.48" fill="#3c4a78"/><g transform="translate(1216.6,841.6) scale(0.72)"><path d="M-7 -3 H-3 L2.4 -8.6 V8.6 L-3 3 H-7 Z" fill="#8a8c88" stroke="#555753" stroke-width="0.9"/><path d="M2 -8 V8" stroke="#c8cac6" stroke-width="1.4"/><path d="M5.6 -2.6 Q7.4 0 5.6 2.6" fill="none" stroke="#4a7ac8" stroke-width="1.2"/></g><path d="M1222.6 838.6 Q1225 841.6 1222.6 844.6" fill="none" stroke="#4a7ac8" stroke-width="0.8"/><g transform="translate(1235,842) scale(0.74)"><path d="M-4.4 -8 H4.4 Q5.6 -1 0.6 1.4 V7 L3.6 8.6 H-3.6 L-0.6 7 V1.4 Q-5.6 -1 -4.4 -8 Z" fill="#e8e8e8" stroke="#9a9a9a" stroke-width="0.6"/><path d="M-4.6 -4.4 H4.6 Q4.6 -0.4 0 0.6 Q-4.6 -0.4 -4.6 -4.4 Z" fill="#b01020"/></g><g transform="translate(1253.4,841.6) scale(0.74)"><rect x="-11.4" y="-7" width="12.4" height="14" fill="#5c6a3c" stroke="#2e3420" stroke-width="1"/><rect x="-8" y="-3.4" width="5.6" height="6.8" fill="#b8bcb0"/><path d="M-10 -8.6 v1.6 m3 -1.6 v1.6 m3 -1.6 v1.6 m3 -1.6 v1.6 M-10 8.6 v-1.6 m3 1.6 v-1.6 m3 1.6 v-1.6 m3 1.6 v-1.6" stroke="#d8b83a" stroke-width="1.4"/><rect x="3.2" y="-10.4" width="7.4" height="20.8" rx="1" fill="#fff" stroke="#2e3032" stroke-width="1.2"/><rect x="4" y="-1" width="5.8" height="10.6" fill="#8a7ad8"/></g><defs><radialGradient id="mg13140841" cx="0.42" cy="0.36" r="0.7"><stop offset="0" stop-color="#e4e4e4"/><stop offset="0.6" stop-color="#cfcfcf"/><stop offset="1" stop-color="#bdbdbd"/></radialGradient></defs><circle cx="1314" cy="841.6" r="6.2" fill="url(#mg13140841)"/></svg>
<span class="t" style="left:181.40px;top:837.03px;font-family:'DejaVu Sans','Liberation Sans',sans-serif;font-weight:normal;font-size:9.30px;color:#707070;transform:scaleX(1.0504);transform-origin:0 0;">[Андрей Петров...</span>
<span class="t" style="left:299.40px;top:837.03px;font-family:'DejaVu Sans','Liberation Sans',sans-serif;font-weight:normal;font-size:9.30px;color:#707070;transform:scaleX(1.0480);transform-origin:0 0;">[Google - Pale M...</span>
<span class="t" style="left:418.40px;top:837.03px;font-family:'DejaVu Sans','Liberation Sans',sans-serif;font-weight:normal;font-size:9.30px;color:#707070;transform:scaleX(1.0266);transform-origin:0 0;">[CAD]</span>
<span class="t" style="left:536.40px;top:837.03px;font-family:'DejaVu Sans','Liberation Sans',sans-serif;font-weight:normal;font-size:9.30px;color:#3a3a3a;transform:scaleX(1.0208);transform-origin:0 0;">Record</span>
<span class="t" style="left:655.00px;top:837.03px;font-family:'DejaVu Sans','Liberation Sans',sans-serif;font-weight:normal;font-size:9.30px;color:#3a3a3a;transform:scaleX(1.0491);transform-origin:0 0;">CAD</span>
<span class="t" style="left:773.40px;top:837.03px;font-family:'DejaVu Sans','Liberation Sans',sans-serif;font-weight:normal;font-size:9.30px;color:#3a3a3a;transform:scaleX(1.0560);transform-origin:0 0;">LTspice XVII - bo...</span>
<span class="t" style="left:892.00px;top:837.03px;font-family:'DejaVu Sans','Liberation Sans',sans-serif;font-weight:normal;font-size:9.30px;color:#3a3a3a;transform:scaleX(1.0439);transform-origin:0 0;">Терминал</span>
<span class="t" style="left:1010.40px;top:837.03px;font-family:'DejaVu Sans','Liberation Sans',sans-serif;font-weight:normal;font-size:9.30px;color:#707070;transform:scaleX(1.0442);transform-origin:0 0;">[bokarev_08.txt (...</span>
<span class="t" style="left:1271.40px;top:837.03px;font-family:'DejaVu Sans','Liberation Sans',sans-serif;font-weight:normal;font-size:9.30px;color:#555;">1</span>
<span class="t" style="left:1286.20px;top:837.03px;font-family:'DejaVu Sans','Liberation Sans',sans-serif;font-weight:normal;font-size:9.30px;color:#555;transform:scaleX(1.0586);transform-origin:0 0;">GHz</span>
<span class="t" style="left:1322.00px;top:837.03px;font-family:'DejaVu Sans','Liberation Sans',sans-serif;font-weight:normal;font-size:9.30px;color:#444;transform:scaleX(1.0291);transform-origin:0 0;">1 °C</span>
<span class="t" style="left:1351.40px;top:837.03px;font-family:'DejaVu Sans','Liberation Sans',sans-serif;font-weight:normal;font-size:9.30px;color:#444;transform:scaleX(1.0152);transform-origin:0 0;">Вс, 28 мар, 04:33</span>
<div class="a" style="left:0px;top:875px;width:1440px;height:25px;background:#ededed;box-shadow:inset 0 1px 0 #f8f8f8;"></div>
<div class="a" style="left:437px;top:876.4px;width:222.4px;height:23px;background:#dedede;border-radius:3px;box-shadow:inset 0 0 0 1px #b8b8b8;"></div>
<svg style="left:0px;top:873px" width="1440" height="27" viewBox="0 873 1440 27" ><g transform="translate(13,887.4) scale(1)"><path d="M-8 -0.8 C-7 -3.4 -3 -4 -0.5 -3.8 C3 -3.8 7 -3.4 7.9 -1.6 C8.8 0.4 8.4 4.4 6.2 6.8 C4.6 8.8 2.4 9.8 0.2 9.8 C-2 9.8 -4.4 9 -5.4 7.6 C-6.2 6.4 -6.4 5.4 -5.6 4.9 C-4.8 4.4 -3.6 4.8 -2.8 5.6 C-1.6 6.8 0.4 7 1.8 6.2 C3 5.4 3 4 1.6 3.5 C0 3 -2 3.4 -4 3.2 C-6.6 3 -8.6 1.6 -8 -0.8 Z" fill="#3c3c3c"/><ellipse cx="5.6" cy="-7.9" rx="3.7" ry="2.3" transform="rotate(-28 5.6 -7.9)" fill="#3c3c3c"/><ellipse cx="0.3" cy="-7.8" rx="1.6" ry="2.4" transform="rotate(12 0.3 -7.8)" fill="#3c3c3c"/><ellipse cx="-3.6" cy="-6.5" rx="1.4" ry="2.1" transform="rotate(-4 -3.6 -6.5)" fill="#3c3c3c"/><ellipse cx="-6.9" cy="-4.4" rx="1.3" ry="1.8" transform="rotate(-20 -6.9 -4.4)" fill="#3c3c3c"/><path d="M7.4 -10 Q9.6 -10.4 10 -8.2" stroke="#3c3c3c" stroke-width="0.8" fill="none"/></g><path d="M29.6 875 V900" stroke="#bcbcbc" stroke-width="1"/><rect x="33.6" y="876.4" width="22.8" height="23.6" rx="3" fill="#e2e2e2"/><g transform="translate(45,887.4) scale(0.98)"><path d="M-10 8 V-7 Q-10 -9 -8 -9 H-3 L-1 -6.6 H8.4 Q10 -6.6 10 -5 V8 Q10 9.4 8.6 9.4 H-8.6 Q-10 9.4 -10 8 Z" fill="#5e8fd0"/><path d="M-10 8 V-3.4 H10 V8 Q10 9.4 8.6 9.4 H-8.6 Q-10 9.4 -10 8 Z" fill="#7aa8e2"/><rect x="-6" y="-1" width="12" height="7.6" fill="none" stroke="#2c5aa0" stroke-width="1.2" stroke-dasharray="2.4 2.2"/><rect x="-2" y="1" width="4" height="3.6" fill="none" stroke="#2c5aa0" stroke-width="1"/></g><g transform="translate(70,888) scale(0.98)"><rect x="-10.4" y="-8.8" width="20.8" height="17.8" rx="2" fill="#5a5e5c" stroke="#222426" stroke-width="1.1"/><rect x="-8.2" y="-6.6" width="16.4" height="11.8" fill="#1e2224"/><path d="M-8 -4.4 h16 M-8 -2.2 h16 M-8 0 h16 M-8 2.2 h16 M-8 4.4 h16" stroke="#3c4042" stroke-width="0.6"/><path d="M-6.2 -3.2 L-3 -1 L-6.2 1.2 M-2 2 H2.2" stroke="#fff" stroke-width="1.3" fill="none"/><path d="M-9.4 6.6 H9.4" stroke="#8a8e8c" stroke-width="0.8"/><rect x="-8.4" y="6.8" width="3" height="1.2" fill="#6ad020"/></g><g transform="translate(94,888.2) scale(1)"><path d="M-8.6 10 V-6 L-6 -9.4 H6 L8.6 -6 V10 Z" fill="#e4e4e2" stroke="#8a8c88" stroke-width="1"/><rect x="-6.4" y="-5.4" width="12.8" height="6.4" fill="#d0d0ce" stroke="#8a8c88" stroke-width="0.9"/><rect x="-6.4" y="2.4" width="12.8" height="6.4" fill="#d0d0ce" stroke="#8a8c88" stroke-width="0.9"/><rect x="-2.6" y="-3.4" width="5.2" height="2.2" fill="#8a8c88"/><rect x="-2.6" y="4.4" width="5.2" height="2.2" fill="#8a8c88"/></g><g transform="translate(118,887.6) scale(1)"><rect x="-8.8" y="-10.4" width="17.6" height="20.8" rx="1.6" fill="#626460" stroke="#3a3c38" stroke-width="1"/><rect x="-6.6" y="-8.2" width="13.2" height="4.6" fill="#9be05a" stroke="#4a8a1a" stroke-width="0.7"/><rect x="-6.6" y="-1.8" width="2.2" height="1.8" fill="#a8aaa6"/><rect x="-6.6" y="1.2" width="2.2" height="1.8" fill="#a8aaa6"/><rect x="-6.6" y="4.2" width="2.2" height="1.8" fill="#a8aaa6"/><rect x="-6.6" y="7.2" width="2.2" height="1.8" fill="#a8aaa6"/><rect x="-3" y="-1.8" width="2.2" height="1.8" fill="#a8aaa6"/><rect x="-3" y="1.2" width="2.2" height="1.8" fill="#a8aaa6"/><rect x="-3" y="4.2" width="2.2" height="1.8" fill="#a8aaa6"/><rect x="-3" y="7.2" width="2.2" height="1.8" fill="#a8aaa6"/><rect x="0.6" y="-1.8" width="2.2" height="1.8" fill="#a8aaa6"/><rect x="0.6" y="1.2" width="2.2" height="1.8" fill="#a8aaa6"/><rect x="0.6" y="4.2" width="2.2" height="1.8" fill="#a8aaa6"/><rect x="0.6" y="7.2" width="2.2" height="1.8" fill="#a8aaa6"/><rect x="4.2" y="-1.8" width="2.2" height="1.8" fill="#a8aaa6"/><rect x="4.2" y="1.2" width="2.2" height="1.8" fill="#a8aaa6"/><rect x="4.2" y="4.2" width="2.2" height="1.8" fill="#a8aaa6"/><rect x="4.2" y="7.2" width="2.2" height="1.8" fill="#a8aaa6"/></g><g transform="translate(142,888.2) scale(1.04)"><rect x="-9.2" y="-9.2" width="18.4" height="18.4" fill="#fff" stroke="#0a6a0a" stroke-width="1.5"/><path d="M-6 -5.4 H-2 L0.4 -2 L2.8 -5.4 H6.4 L2.2 0 L6.8 5.8 H2.6 L0.2 2.4 L-2.6 5.8 H-6.4 L-1.8 -0.2 Z" fill="#0a7a0a"/><path d="M-7 3 L7.4 -3.4" stroke="#fff" stroke-width="0.7"/></g><g transform="translate(166,888.2) scale(1.04)"><rect x="-9.2" y="-9.2" width="18.4" height="18.4" fill="#fff" stroke="#0a0a8a" stroke-width="1.5"/><path d="M-7 -5 H-3.6 L-4 1.6 L-0.6 -5 H2.2 L2 1.6 L5 -5 H8 L2.8 5.4 H-0.4 L-0.2 -0.6 L-3.4 5.4 H-6.6 Z" fill="#0a0a8a"/></g><defs><radialGradient id="mg1900888" cx="0.42" cy="0.36" r="0.7"><stop offset="0" stop-color="#f4f6fb"/><stop offset="0.6" stop-color="#ccd6ea"/><stop offset="1" stop-color="#aebad6"/></radialGradient></defs><circle cx="190" cy="888" r="12" fill="url(#mg1900888)"/><defs><radialGradient id="mg2246888" cx="0.42" cy="0.36" r="0.7"><stop offset="0" stop-color="#f4f6fb"/><stop offset="0.6" stop-color="#ccd6ea"/><stop offset="1" stop-color="#aebad6"/></radialGradient></defs><circle cx="224.6" cy="888" r="7.6" fill="url(#mg2246888)"/><g transform="translate(442,880) scale(1.025)"><rect x="0" y="0" width="16" height="16" rx="2" fill="#fff"/><path d="M1.6 2.6 L5 13 L8.6 2.6" fill="none" stroke="#ff2a2a" stroke-width="1.9"/><path d="M9.8 7 V4.6 Q9.8 3 11.6 3 Q13.4 3 13.4 4.6 V7" fill="none" stroke="#10b010" stroke-width="1.5"/><path d="M14 9.2 H12 Q10 9.2 10 11 Q10 12.8 12 12.8 H14" fill="none" stroke="#1040ff" stroke-width="1.5"/></g><g transform="translate(673,888) scale(1.1)"><path d="M-8 6.4 V-5.6 Q-8 -7 -6.6 -7 H-2.4 L-0.8 -5 H6.8 Q8 -5 8 -3.8 V6.4 Q8 7.4 7 7.4 H-7 Q-8 7.4 -8 6.4 Z" fill="#5e8fd0"/><path d="M-8 6.4 V-2.4 H8 V6.4 Q8 7.4 7 7.4 H-7 Q-8 7.4 -8 6.4 Z" fill="#86b0e6"/></g><rect x="1000" y="876.4" width="24" height="23.6" rx="3" fill="#e2e2e2"/><g transform="translate(1012,887.4) scale(1.12)"><path d="M-10 6 V-6 Q-10 -7.4 -8.6 -7.4 H-3 L-1 -5.4 H8.6 Q10 -5.4 10 -4 V6 Q10 7.4 8.6 7.4 H-8.6 Q-10 7.4 -10 6 Z" fill="#5e8fd0"/><path d="M-10 6 V-2.6 H10 V6 Q10 7.4 8.6 7.4 H-8.6 Q-10 7.4 -10 6 Z" fill="#86b0e6"/><rect x="-3.6" y="3.6" width="7" height="2" rx="1" fill="#555"/><path d="M10 2 V7.4 H4.6 Z" fill="#20d020"/></g><g transform="translate(1045,888) scale(1)"><ellipse cx="0" cy="0" rx="8.6" ry="11.4" fill="#2f6fc4"/><ellipse cx="0" cy="-3" rx="7" ry="7.6" fill="#4a88d8" opacity="0.6"/><path d="M-4 -4.4 L4 3.8 L0 7.6 V-7.6 L4 -3.8 L-4 4.4" fill="none" stroke="#fff" stroke-width="1.7"/></g><rect x="1059" y="876.6" width="24" height="24" fill="#f4f0f0"/><rect x="1059" y="876.60" width="24" height="1.85" fill="#c8323c"/><rect x="1059" y="880.29" width="24" height="1.85" fill="#c8323c"/><rect x="1059" y="883.98" width="24" height="1.85" fill="#c8323c"/><rect x="1059" y="887.68" width="24" height="1.85" fill="#c8323c"/><rect x="1059" y="891.37" width="24" height="1.85" fill="#c8323c"/><rect x="1059" y="895.06" width="24" height="1.85" fill="#c8323c"/><rect x="1059" y="898.75" width="24" height="1.85" fill="#c8323c"/><rect x="1059" y="876.6" width="13.20" height="12.92" fill="#3c4a78"/><g transform="translate(1093.6,888.2) scale(0.88)"><path d="M-7 -3 H-3 L2.4 -8.6 V8.6 L-3 3 H-7 Z" fill="#8a8c88" stroke="#555753" stroke-width="0.9"/><path d="M2 -8 V8" stroke="#c8cac6" stroke-width="1.4"/><path d="M5.6 -2.6 Q7.4 0 5.6 2.6" fill="none" stroke="#4a7ac8" stroke-width="1.2"/></g><g transform="translate(1112,879)"><rect x="0.6" y="11" width="4" height="6.4" fill="#3a6ab8" stroke="#2a4a88" stroke-width="0.6"/><rect x="5.4" y="7.4" width="4" height="10" fill="#3a6ab8" stroke="#2a4a88" stroke-width="0.6"/><rect x="10.2" y="3.8" width="4" height="13.6" fill="#3a6ab8" stroke="#2a4a88" stroke-width="0.6"/><rect x="15" y="0.4" width="4" height="17" fill="#c8c8c8" stroke="#7a7a7a" stroke-width="0.6"/></g><g transform="translate(1136,877.2)"><rect x="1" y="2" width="12" height="16.4" rx="1" fill="#f4f4f4" stroke="#8a8a8a" stroke-width="1"/><rect x="4.4" y="0.4" width="5" height="2" fill="#8a8a8a"/><rect x="2.4" y="12.4" width="9.2" height="4.6" fill="#3a6ab8"/><path d="M8.6 4.6 L4.6 10.4 H7.6 L6 15 L10.6 8.6 H7.6 Z" fill="#f0b020"/><path d="M10.6 20.6 V16.4 Q10.6 12.8 14 12.8 H18.4 Q21.6 12.8 21.6 16.4 V20.6 Z" fill="#e8e8e8" stroke="#8a8a8a" stroke-width="1"/><path d="M13.4 20.6 v2 M18.8 20.6 v2" stroke="#8a8a8a" stroke-width="1.4"/></g><g transform="translate(1170.6,888.6) scale(0.92)"><path d="M-4.4 -8 H4.4 Q5.6 -1 0.6 1.4 V7 L3.6 8.6 H-3.6 L-0.6 7 V1.4 Q-5.6 -1 -4.4 -8 Z" fill="#e8e8e8" stroke="#9a9a9a" stroke-width="0.6"/><path d="M-4.6 -4.4 H4.6 Q4.6 -0.4 0 0.6 Q-4.6 -0.4 -4.6 -4.4 Z" fill="#b01020"/></g><g transform="translate(1194.6,888) scale(1)"><rect x="-11.4" y="-7" width="12.4" height="14" fill="#5c6a3c" stroke="#2e3420" stroke-width="1"/><rect x="-8" y="-3.4" width="5.6" height="6.8" fill="#b8bcb0"/><path d="M-10 -8.6 v1.6 m3 -1.6 v1.6 m3 -1.6 v1.6 m3 -1.6 v1.6 M-10 8.6 v-1.6 m3 1.6 v-1.6 m3 1.6 v-1.6 m3 1.6 v-1.6" stroke="#d8b83a" stroke-width="1.4"/><rect x="3.2" y="-10.4" width="7.4" height="20.8" rx="1" fill="#fff" stroke="#2e3032" stroke-width="1.2"/><rect x="4" y="-1" width="5.8" height="10.6" fill="#8a7ad8"/></g><defs><radialGradient id="mg12746888" cx="0.42" cy="0.36" r="0.7"><stop offset="0" stop-color="#e4e4e4"/><stop offset="0.6" stop-color="#cfcfcf"/><stop offset="1" stop-color="#bdbdbd"/></radialGradient></defs><circle cx="1274.6" cy="888" r="7.6" fill="url(#mg12746888)"/></svg>
<span class="t" style="left:241.00px;top:881.03px;font-family:'DejaVu Sans','Liberation Sans',sans-serif;font-weight:normal;font-size:13.20px;color:#2e2e2e;transform:scaleX(0.9831);transform-origin:0 0;">АВТОКЛУБ ВАЗ-2106. Тюн...</span>
<span class="t" style="left:465.00px;top:881.03px;font-family:'DejaVu Sans','Liberation Sans',sans-serif;font-weight:normal;font-size:13.20px;color:#2e2e2e;">yes - VNC Viewer</span>
<span class="t" style="left:689.40px;top:881.03px;font-family:'DejaVu Sans','Liberation Sans',sans-serif;font-weight:normal;font-size:13.20px;color:#2e2e2e;transform:scaleX(0.9770);transform-origin:0 0;">tor-browser_ru</span>
<span class="t" style="left:1210.40px;top:881.03px;font-family:'DejaVu Sans','Liberation Sans',sans-serif;font-weight:normal;font-size:13.20px;color:#2e2e2e;transform:scaleX(0.9508);transform-origin:0 0;">822 MHz</span>
<span class="t" style="left:1285.40px;top:881.03px;font-family:'DejaVu Sans','Liberation Sans',sans-serif;font-weight:normal;font-size:13.20px;color:#2e2e2e;transform:scaleX(0.9714);transform-origin:0 0;">1 °C</span>
<span class="t" style="left:1325.40px;top:881.03px;font-family:'DejaVu Sans','Liberation Sans',sans-serif;font-weight:normal;font-size:13.20px;color:#2e2e2e;transform:scaleX(0.9514);transform-origin:0 0;">Вс, 28 мар, 04:33</span>

</body></html>
